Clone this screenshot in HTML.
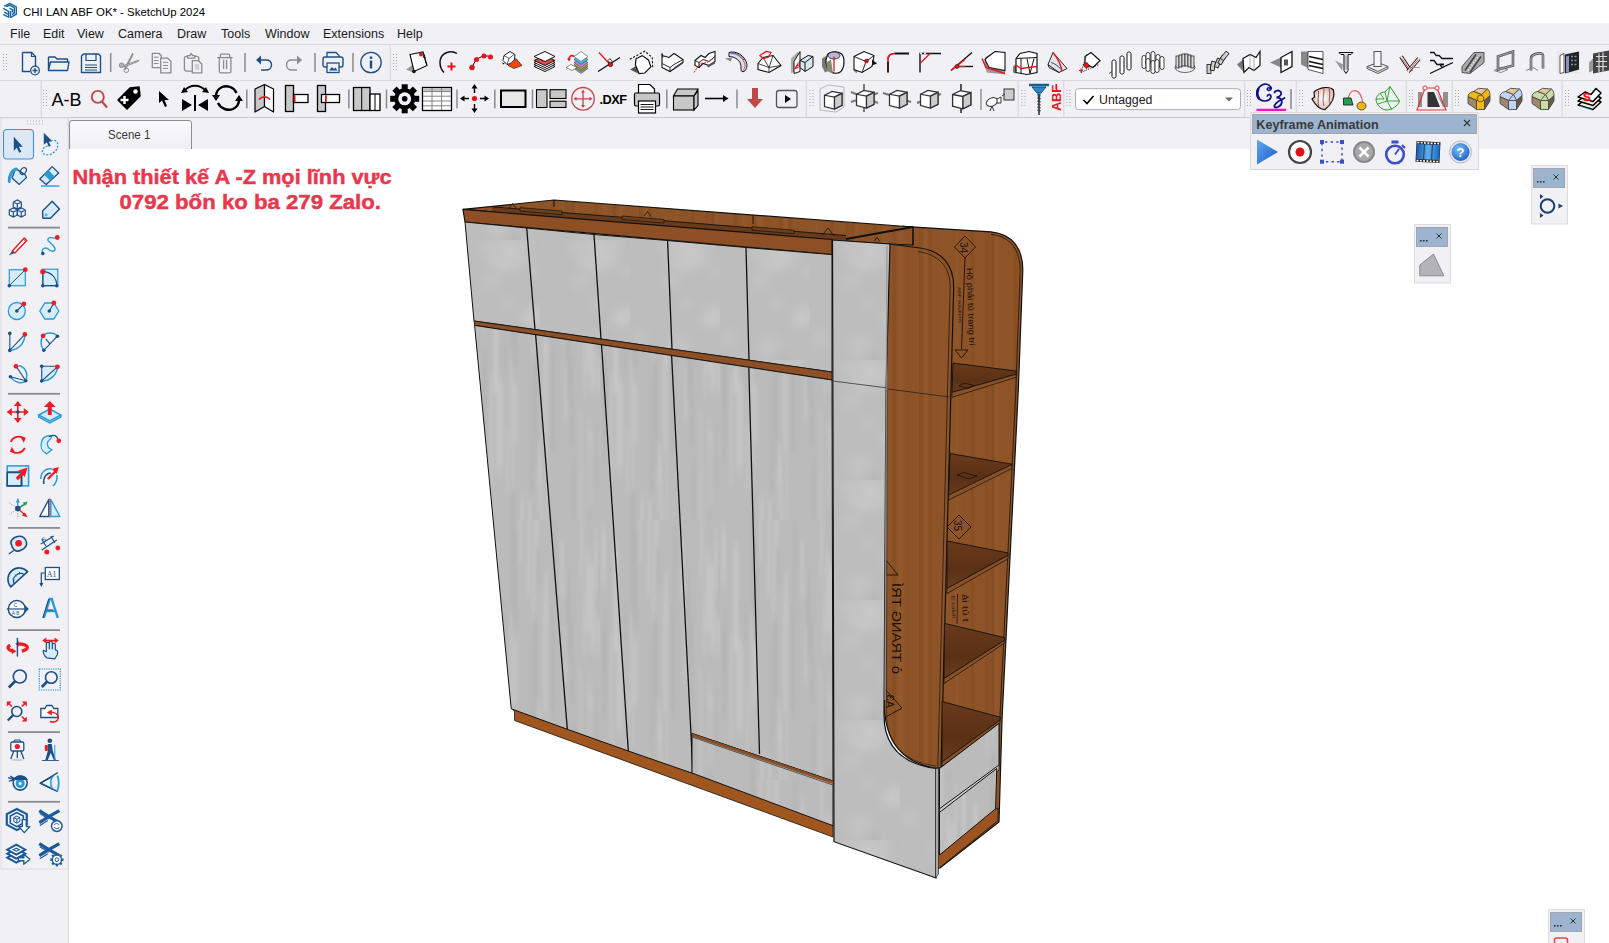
<!DOCTYPE html>
<html><head><meta charset="utf-8"><style>
html,body{margin:0;padding:0;width:1609px;height:943px;overflow:hidden;background:#fff}
svg{display:block;position:absolute;left:0;top:0;font-family:"Liberation Sans",sans-serif}
</style></head><body>
<svg width="1609" height="943" viewBox="0 0 1609 943" shape-rendering="geometricPrecision"><rect x="0" y="0" width="1609" height="23" fill="#ffffff"/><rect x="0" y="23" width="1609" height="21" fill="#f0f0f5"/><rect x="0" y="44" width="1609" height="1" fill="#d9d9de"/><rect x="0" y="45" width="1609" height="73" fill="#f0f0f5"/><rect x="0" y="80" width="1609" height="1" fill="#d9d9de"/><rect x="0" y="117" width="1609" height="1" fill="#c9c9ce"/><rect x="0" y="118" width="1609" height="31" fill="#f0f0f5"/><rect x="69" y="149" width="1540" height="794" fill="#ffffff"/><rect x="0" y="118" width="69" height="825" fill="#f0f0f5"/><rect x="68" y="118" width="1" height="825" fill="#d9d9de"/><text x="23.1" y="15.7" font-family='"Liberation Sans", sans-serif' font-size="11.6" fill="#000" textLength="182" lengthAdjust="spacingAndGlyphs">CHI LAN ABF OK* - SketchUp 2024</text><g fill="none" stroke="#1a64a8" stroke-width="1.5" stroke-linejoin="round"><path d="M4.2,6.3 L9.7,3.4 L16.3,6.8 V14.2 L10.5,17.6"/><path d="M3.2,8.3 L8.6,11.3 V17.8"/><path d="M4.3,12.2 L7.8,14.1"/><path d="M3.4,14.3 L7.8,16.8"/><path d="M6.2,6.6 L9.6,5.2 L14.2,7.6 V13.2 L12,14.6"/><path d="M9.4,8.2 L12.4,9.8 V12.4"/><path d="M10.5,11 V17.5"/></g><text x="10" y="38" font-family='"Liberation Sans", sans-serif' font-size="12.5" fill="#1a1a1a">File</text><text x="43" y="38" font-family='"Liberation Sans", sans-serif' font-size="12.5" fill="#1a1a1a">Edit</text><text x="77" y="38" font-family='"Liberation Sans", sans-serif' font-size="12.5" fill="#1a1a1a">View</text><text x="118" y="38" font-family='"Liberation Sans", sans-serif' font-size="12.5" fill="#1a1a1a">Camera</text><text x="177" y="38" font-family='"Liberation Sans", sans-serif' font-size="12.5" fill="#1a1a1a">Draw</text><text x="221" y="38" font-family='"Liberation Sans", sans-serif' font-size="12.5" fill="#1a1a1a">Tools</text><text x="265" y="38" font-family='"Liberation Sans", sans-serif' font-size="12.5" fill="#1a1a1a">Window</text><text x="323" y="38" font-family='"Liberation Sans", sans-serif' font-size="12.5" fill="#1a1a1a">Extensions</text><text x="397" y="38" font-family='"Liberation Sans", sans-serif' font-size="12.5" fill="#1a1a1a">Help</text><rect x="3" y="54" width="1" height="1" fill="#a8a8b0"/><rect x="6" y="54" width="1" height="1" fill="#a8a8b0"/><rect x="3" y="57" width="1" height="1" fill="#a8a8b0"/><rect x="6" y="57" width="1" height="1" fill="#a8a8b0"/><rect x="3" y="60" width="1" height="1" fill="#a8a8b0"/><rect x="6" y="60" width="1" height="1" fill="#a8a8b0"/><rect x="3" y="63" width="1" height="1" fill="#a8a8b0"/><rect x="6" y="63" width="1" height="1" fill="#a8a8b0"/><rect x="3" y="66" width="1" height="1" fill="#a8a8b0"/><rect x="6" y="66" width="1" height="1" fill="#a8a8b0"/><rect x="3" y="69" width="1" height="1" fill="#a8a8b0"/><rect x="6" y="69" width="1" height="1" fill="#a8a8b0"/><rect x="389.5" y="45" width="1.5" height="35" fill="#dcdce2"/><rect x="393" y="54" width="1" height="1" fill="#a8a8b0"/><rect x="396" y="54" width="1" height="1" fill="#a8a8b0"/><rect x="393" y="57" width="1" height="1" fill="#a8a8b0"/><rect x="396" y="57" width="1" height="1" fill="#a8a8b0"/><rect x="393" y="60" width="1" height="1" fill="#a8a8b0"/><rect x="396" y="60" width="1" height="1" fill="#a8a8b0"/><rect x="393" y="63" width="1" height="1" fill="#a8a8b0"/><rect x="396" y="63" width="1" height="1" fill="#a8a8b0"/><rect x="393" y="66" width="1" height="1" fill="#a8a8b0"/><rect x="396" y="66" width="1" height="1" fill="#a8a8b0"/><rect x="393" y="69" width="1" height="1" fill="#a8a8b0"/><rect x="396" y="69" width="1" height="1" fill="#a8a8b0"/><g transform="translate(20,51)"><path d="M2.5,1.5 H11.5 L15.5,5.5 V18 M2.5,1.5 V20.5 H10" fill="none" stroke="#1d4f86" stroke-width="1.4"/><path d="M11.5,1.5 V5.5 H15.5" fill="none" stroke="#1d4f86" stroke-width="1.2"/><circle cx="15" cy="19.5" r="4.3" fill="#f0f0f5" stroke="#1d4f86" stroke-width="1.3"/><path d="M15,17 V22 M12.5,19.5 H17.5" stroke="#1d4f86" stroke-width="1.3"/></g><g transform="translate(47,52)"><path d="M1.5,5 H8 L10,7 H20.5 V10 M1.5,5 V18.5 H20.5 L22,10 H3.5 L1.5,18" fill="none" stroke="#1d4f86" stroke-width="1.4" stroke-linejoin="round"/></g><g transform="translate(80,52)"><path d="M3.5,2 H18.5 L20.5,4 V20.5 H1.5 V4 Z" fill="none" stroke="#1d4f86" stroke-width="1.4"/><path d="M6,2 V8.5 H16 V2" fill="none" stroke="#1d4f86" stroke-width="1.2"/><path d="M5,13 H17 M5,15.5 H17 M5,18 H17" stroke="#1d4f86" stroke-width="1"/></g><rect x="109.95" y="53" width="1.5" height="19" fill="#8c8c8c"/><g transform="translate(119,52)"><path d="M13.6,1.3 L14.3,2 L6.5,17.5 L5.4,16.8 Z" fill="#8c8c8c" stroke="#8c8c8c" stroke-width="0.9" stroke-linejoin="round"/><path d="M19.7,8.2 L19.5,9.3 L5,14.8 L4.6,13.6 Z" fill="#f0f0f5" stroke="#8c8c8c" stroke-width="1" stroke-linejoin="round"/><circle cx="2.6" cy="13.3" r="2.3" fill="#b4b4b8" stroke="#8c8c8c" stroke-width="1"/><circle cx="7.3" cy="18.2" r="2.3" fill="none" stroke="#8c8c8c" stroke-width="1"/></g><g transform="translate(151,51)"><path d="M1.3,2.3 H8 L10.3,4.8 V16.6 H1.3 Z" fill="#f0f0f5" stroke="#8c8c8c" stroke-width="1.3" stroke-linejoin="round"/><path d="M9.7,7.2 H16.8 L19.9,10.4 V21.9 H9.7 Z" fill="#f0f0f5" stroke="#8c8c8c" stroke-width="1.3" stroke-linejoin="round"/><path d="M2.8,6.2 H7.5 M2.8,9.5 H7.5 M2.8,12.5 H7.5 M12,11.4 H17 M12,14.5 H17 M12,17.4 H17" stroke="#8c8c8c" stroke-width="1"/></g><g transform="translate(183,51)"><rect x="1.4" y="5.3" width="14.4" height="14.8" rx="2" fill="none" stroke="#8c8c8c" stroke-width="1.3"/><path d="M4.5,7.1 V4.6 H6.8 L8.2,2.4 L9.6,4.6 H11.9 V7.1 Z" fill="#f0f0f5" stroke="#8c8c8c" stroke-width="1.3" stroke-linejoin="round"/><path d="M9.3,9.7 H15.5 L18.8,13 V21.9 H9.3 Z" fill="#f0f0f5" stroke="#8c8c8c" stroke-width="1.3" stroke-linejoin="round"/><rect x="11.9" y="13.1" width="4.3" height="5.7" fill="#d0d0d4"/></g><g transform="translate(217,51)"><path d="M0.3,6.6 H15.7" stroke="#8c8c8c" stroke-width="1.3"/><path d="M3.3,6.6 V4.3 Q3.3,3.1 4.5,3.1 H11.4 Q12.6,3.1 12.6,4.3 V6.6" fill="none" stroke="#8c8c8c" stroke-width="1.3"/><path d="M2.3,6.6 V20.4 Q2.3,21.9 3.8,21.9 H12.4 Q13.9,21.9 13.9,20.4 V6.6" fill="none" stroke="#8c8c8c" stroke-width="1.3"/><path d="M6.6,8.8 V17.9 M9.6,8.8 V17.9" stroke="#8c8c8c" stroke-width="1.3"/></g><rect x="244.25" y="53" width="1.5" height="19" fill="#8c8c8c"/><g transform="translate(255,52)"><path d="M4,8 H11 C15,8 16.5,10.5 16.5,13 C16.5,16 14,18 11,18 H6" fill="none" stroke="#1d4f86" stroke-width="1.4"/><path d="M1,8 L6,3.5 L6,12.5 Z" fill="#1d4f86"/></g><g transform="translate(286,52)"><g transform="translate(17,0) scale(-1,1)"><path d="M4,8 H11 C15,8 16.5,10.5 16.5,13 C16.5,16 14,18 11,18 H6" fill="none" stroke="#8c8c8c" stroke-width="1.4"/><path d="M1,8 L6,3.5 L6,12.5 Z" fill="#8c8c8c"/></g></g><rect x="314.25" y="53" width="1.5" height="19" fill="#8c8c8c"/><g transform="translate(322,51)"><path d="M5,6 V1.5 H14 L17,4.5 V6" fill="none" stroke="#1d4f86" stroke-width="1.3"/><rect x="1" y="6" width="20" height="10" rx="2" fill="none" stroke="#1d4f86" stroke-width="1.4"/><rect x="5" y="12" width="12" height="9.5" fill="#f0f0f5" stroke="#1d4f86" stroke-width="1.3"/><path d="M7,19.5 L10,16 L12,18 L13.5,16.5 L15.5,19.5 Z" fill="#1d4f86"/></g><rect x="352.25" y="53" width="1.5" height="19" fill="#8c8c8c"/><g transform="translate(360,51.5)"><circle cx="11" cy="11" r="10.2" fill="none" stroke="#1d4f86" stroke-width="1.3"/><rect x="9.8" y="9" width="2.4" height="8" fill="#1d4f86"/><rect x="9.8" y="5" width="2.4" height="2.4" fill="#1d4f86"/></g><g transform="translate(405,50.5)"><path d="M1,19 L8,14 L8,22 Z" fill="#999"/><path d="M5,4 L18,1.5 L22,15 L9,21 Z" fill="#ffffff" stroke="#111111" stroke-width="1.2"/><circle cx="16" cy="4" r="2" fill="#e8141c"/><circle cx="9" cy="21" r="1.8" fill="#111111"/><path d="M19,4 L21,13" stroke="#111111" stroke-width="1"/><path d="M17.5,7 L19.5,3.5 L20.5,7.5Z" fill="#111111"/></g><g transform="translate(437,50.5)"><path d="M20,3 C14,-1 3,2 3,12 C3,17 5,20 7,22" fill="none" stroke="#111111" stroke-width="1.5"/><path d="M14.5,12 V20 M10.5,16 H18.5" stroke="#e8141c" stroke-width="2"/></g><g transform="translate(469,50.5)"><path d="M3,17 L7,9 L15,5 L21,6" fill="none" stroke="#111111" stroke-width="1"/><circle cx="3" cy="17" r="2.5" fill="#e8141c" stroke="#600" stroke-width="0.4"/><circle cx="7.5" cy="9" r="2.5" fill="#e8141c"/><circle cx="15" cy="5.5" r="2.5" fill="#e8141c"/><circle cx="21.5" cy="6.5" r="2.5" fill="#e8141c"/></g><g transform="translate(501,50.5)"><path d="M3,5 L9,1 L14,4 L13,12 L6,14 L2,10 Z" fill="#ffffff" stroke="#111111" stroke-width="0.9"/><path d="M3,5 L8,8 L13,4 M8,8 L6,14" stroke="#111111" stroke-width="0.7" fill="none"/><path d="M7,15 L15,8 L21,15 L13,18 Z" fill="#f04810" stroke="#111111" stroke-width="0.6"/><path d="M1,12 L4,13 L2,14 Z" fill="#111111"/></g><g transform="translate(533,50.5)"><path d="M1,16 L12,11 L22,16 L12,21 Z" fill="#ffffff" stroke="#111111" stroke-width="1"/><path d="M1,14 L12,9 L22,14 L12,19 Z" fill="#ffffff" stroke="#111111" stroke-width="1"/><path d="M1,12 L12,7 L22,12 L12,17 Z" fill="#ffffff" stroke="#111111" stroke-width="1"/><path d="M1,10 L12,5 L22,10 L12,15 Z" fill="#e84848" stroke="#111111" stroke-width="1"/><path d="M1,6 L12,1 L22,6 L12,11 Z" fill="#ffffff" stroke="#111111" stroke-width="1"/></g><g transform="translate(565,50.5)"><path d="M9,18 L16,13 L23,18 L16,23 Z" fill="#9a9a9a" stroke="#444" stroke-width="0.6"/><path d="M9,16 L16,11 L23,16 L16,21 Z" fill="#70b060" stroke="#444" stroke-width="0.6"/><path d="M9,14 L16,9 L23,14 L16,19 Z" fill="#e0a060" stroke="#444" stroke-width="0.6"/><path d="M9,12 L16,7 L23,12 L16,17 Z" fill="#c080e0" stroke="#444" stroke-width="0.6"/><path d="M9,9 L16,4 L23,9 L16,14 Z" fill="#30c0e0" stroke="#444" stroke-width="0.6"/><path d="M9,6 L16,1 L23,6 L16,11 Z" fill="#ffffff" stroke="#444" stroke-width="0.6"/><path d="M1,17 L6,14 L12,17 L7,20 Z" fill="#ffffff" stroke="#444" stroke-width="0.6"/><path d="M9,6 C6,4 4,6 4,9" fill="none" stroke="#e8141c" stroke-width="1.8"/><path d="M2,8 L6,8 L4,11Z" fill="#e8141c"/></g><g transform="translate(597,50.5)"><path d="M1,21 L23,7" stroke="#111111" stroke-width="1.3"/><path d="M2,2 L13,14" stroke="#e8141c" stroke-width="1.3"/><path d="M11,10 L13,8 L15,11 L13,13Z" fill="#ffffff" stroke="#111111" stroke-width="0.8"/><circle cx="13.5" cy="14" r="2.2" fill="#e8141c" stroke="#111111" stroke-width="0.6"/></g><g transform="translate(629,50.5)"><path d="M0.8,8.8 L15.7,0.7 L23.2,6.9 L23.8,18.1" fill="none" stroke="#111111" stroke-width="1.1" stroke-dasharray="2.2,1.6"/><path d="M1,19 L8,15 L9,23 Z" fill="#555"/><path d="M7,8.2 L13.2,5.1 L19.4,9.4 L21.9,16.3 L15.7,22.5 L10.1,23.1 L6.4,14.4Z" fill="#ffffff" stroke="#111111" stroke-width="1.2"/></g><g transform="translate(661,50.5)"><path d="M1,3 V17 L9,21 L22,12 V9 L13,3 L8,7 L1,5" fill="#ffffff" stroke="#111111" stroke-width="1.1"/><path d="M1,13 L9,17 L13,14 L22,9 M9,17 V21 M1,3 L2,7" fill="none" stroke="#111111" stroke-width="0.9"/><path d="M13,19 L22,13 V11 L13,17Z" fill="#444"/></g><g transform="translate(693,50.5)"><path d="M2,10 L8,5 L12,7 L16,3 L22,1 V11 L16,15 L10,13 L6,17 L2,15 Z" fill="#ffffff" stroke="#111111" stroke-width="1.1"/><path d="M2,10 L6,12 V17 M6,12 L10,9 L16,11 L22,6" fill="none" stroke="#111111" stroke-width="0.9"/><path d="M1,22 L7,13 L14,12 L20,8" fill="none" stroke="#e8141c" stroke-width="1" stroke-dasharray="2,1"/><path d="M14,15 L22,11 V13 L15,17Z" fill="#555"/></g><g transform="translate(725,50.5)"><path d="M0,8 L7,7 L6,11 Z" fill="#888"/><path d="M4,2 C10,0 20,4 22,14 C22,18 20,22 17,21 C15,20 17,16 15,12 C12,7 7,6 4,6 Z" fill="#e0e0e0" stroke="#111111" stroke-width="1"/><path d="M6,3 C12,3 18,7 20,14 C20,17 19,19 18,20" fill="none" stroke="#c03070" stroke-width="0.8"/><path d="M5,2.5 C11,2 17,5 19,10" fill="none" stroke="#3050c0" stroke-width="0.8"/></g><g transform="translate(757,50.5)"><path d="M1,13 L6,7 L16,5 L24,15 L12,22 L1,19 Z" fill="#ffffff" stroke="#111111" stroke-width="1.1"/><path d="M1,13 L12,17 L24,15 M12,17 V22 M6,7 L12,17 M16,5 L12,17" fill="none" stroke="#111111" stroke-width="0.8"/><path d="M3,5 L9,1 L14,2 L11,7 L6,8 Z" fill="none" stroke="#e8141c" stroke-width="1.2"/></g><g transform="translate(789,50.5)"><path d="M2,8 L9,1 V19 L2,23 Z" fill="#aaa"/><path d="M5,11 L11,1 V21 L5,23 Z" fill="#ffffff" stroke="#111111" stroke-width="1"/><path d="M6,18 L9,13 L9,17Z" fill="none" stroke="#e8141c" stroke-width="1.1"/><path d="M11,10 L19,5 L24,6 V16 L16,21 L11,17Z" fill="#d8e6ee" stroke="#111111" stroke-width="1"/><path d="M11,10 L16,12 L24,6 M16,12 V21" fill="none" stroke="#111111" stroke-width="1"/></g><g transform="translate(821,50.5)"><path d="M1,8 L6,5 L8,20 L4,22 L1,16Z" fill="#777"/><path d="M6,6 C6,1 16,0 20,3 C24,6 24,16 20,21 C16,24 10,23 8,19 C5,16 4,10 6,6Z" fill="#ffffff" stroke="#111111" stroke-width="1.2"/><ellipse cx="13" cy="5" rx="6" ry="3.5" fill="#b8b8d8" stroke="#111111" stroke-width="0.8"/><path d="M13,6 V21" stroke="#e8141c" stroke-width="1.3"/><path d="M5,12 L10,9 L12,23 L7,21Z" fill="#8a8a70"/></g><g transform="translate(853,50.5)"><path d="M0,20 L4,19 L4,23Z" fill="#888"/><path d="M1,6 L11,1 L21,5 L19,16 L9,22 L1,19 Z" fill="#ffffff" stroke="#111111" stroke-width="1.1"/><path d="M1,6 L13,11 L21,5 M13,11 L9,22" fill="none" stroke="#111111" stroke-width="0.9"/><circle cx="13.5" cy="10.5" r="2" fill="#e8141c" stroke="#111111" stroke-width="0.5"/><path d="M19,9 L24,13 L19,15Z" fill="#111111"/></g><g transform="translate(885,50.5)"><path d="M3,22 V9 C3,5 5,3 10,3" fill="none" stroke="#e8141c" stroke-width="1.5"/><path d="M3,22 V11" stroke="#111111" stroke-width="1.6"/><path d="M10,3 H24" stroke="#111111" stroke-width="2"/><path d="M3,9 C3,5 5,3 10,3" fill="none" stroke="#e8141c" stroke-width="1.5"/></g><g transform="translate(917,50.5)"><path d="M3,22 V3 H24" fill="none" stroke="#111111" stroke-width="1.4" stroke-dasharray="0"/><path d="M3,3 H10" stroke="#f0f0f5" stroke-width="1.6" stroke-dasharray="2,2"/><path d="M3,13 L13,3" stroke="#e8141c" stroke-width="1.3"/></g><g transform="translate(949,50.5)"><path d="M2,20 L23,2" stroke="#111111" stroke-width="1.3"/><path d="M2,20 L16,9" stroke="#e8141c" stroke-width="1.3"/><path d="M8,16 H24" stroke="#111111" stroke-width="1.3"/><path d="M8,16 H16" stroke="#e8141c" stroke-width="1.3"/><circle cx="8" cy="16" r="2" fill="#e8141c" stroke="#111111" stroke-width="0.6"/></g><g transform="translate(981,50.5)"><path d="M3,14 L6,22 L24,24 V2 L14,1 L4,7Z" fill="#999"/><path d="M6,7 L14,1 L24,2 V20 L8,17 L4,9Z" fill="#ffffff" stroke="#111111" stroke-width="1.1"/><path d="M1,8 L5,17 L24,23" fill="none" stroke="#e8141c" stroke-width="1.5"/></g><g transform="translate(1013,50.5)"><path d="M0,16 L3,14 L3,23 L0,22Z" fill="#777"/><path d="M3,8 L7,3 L16,1 L24,3 V22 L14,24 L3,22 Z" fill="#ffffff" stroke="#111111" stroke-width="1.2"/><path d="M3,8 L24,7 M8,8 V23 M14,8 L17,23 L21,8" fill="none" stroke="#111111" stroke-width="1"/><path d="M2,14 L8,18 L15,17 L24,16" fill="none" stroke="#e8141c" stroke-width="1.4"/></g><g transform="translate(1045,50.5)"><path d="M3,14 L8,2 C13,7 17,13 22,18 L14,22 L4,17Z" fill="#e2e2e2" stroke="#111111" stroke-width="0.9"/><path d="M8,2 C12,7 16,13 17,21" fill="none" stroke="#e8141c" stroke-width="1.3"/><path d="M6,12 C10,13 14,16 16,19" fill="none" stroke="#3050d0" stroke-width="1"/><path d="M3,14 L14,22" stroke="#111111" stroke-width="0.9"/></g><g transform="translate(1077,50.5)"><path d="M8,6 L14,2 L23,10 L16,17 L8,13Z" fill="#ffffff" stroke="#111111" stroke-width="1.2"/><path d="M4,22 L10,3 M4,22 L22,14" stroke="#111111" stroke-width="0.8" stroke-dasharray="1.5,1"/><path d="M6,14 L10,12 L13,16 L9,18Z" fill="#e8141c" stroke="#111111" stroke-width="0.6"/><path d="M2,20 H6 M4,18 V22" stroke="#e8141c" stroke-width="1"/></g><g transform="translate(1109,50.5)"><path d="M0,23 L5,20" stroke="#555" stroke-width="1"/><path d="M3,11 C3,9 7,9 7,11 V26 C7,28 3,28 3,26 Z" fill="#ffffff" stroke="#111111" stroke-width="1"/><path d="M11,7 C11,5 15,5 15,7 V22 C15,24 11,24 11,22 Z" fill="#ffffff" stroke="#111111" stroke-width="1"/><path d="M18,3 C18,1 22,1 22,3 V18 C22,20 18,20 18,18 Z" fill="#ffffff" stroke="#111111" stroke-width="1"/></g><g transform="translate(1141,50.5)"><rect x="1" y="5" width="4" height="13" rx="2" fill="#ffffff" stroke="#111111" stroke-width="0.8"/><rect x="5" y="2" width="4" height="13" rx="2" fill="#ffffff" stroke="#111111" stroke-width="0.8"/><rect x="10" y="1" width="4" height="13" rx="2" fill="#ffffff" stroke="#111111" stroke-width="0.8"/><rect x="15" y="4" width="4" height="13" rx="2" fill="#ffffff" stroke="#111111" stroke-width="0.8"/><rect x="19" y="6" width="4" height="13" rx="2" fill="#ffffff" stroke="#111111" stroke-width="0.8"/><rect x="5" y="8" width="4" height="13" rx="2" fill="#ffffff" stroke="#111111" stroke-width="0.8"/><rect x="10" y="10" width="4" height="13" rx="2" fill="#ffffff" stroke="#111111" stroke-width="0.8"/><rect x="14" y="9" width="4" height="13" rx="2" fill="#ffffff" stroke="#111111" stroke-width="0.8"/></g><g transform="translate(1173,50.5)"><ellipse cx="12" cy="17" rx="10" ry="5" fill="none" stroke="#444" stroke-width="0.8"/><rect x="3" y="5.5" width="3" height="12" fill="#ddd" stroke="#111111" stroke-width="0.7"/><rect x="6" y="4.5" width="3" height="12" fill="#ddd" stroke="#111111" stroke-width="0.7"/><rect x="9" y="3.5" width="3" height="12" fill="#ddd" stroke="#111111" stroke-width="0.7"/><rect x="12" y="3.5" width="3" height="12" fill="#ddd" stroke="#111111" stroke-width="0.7"/><rect x="15" y="4.5" width="3" height="12" fill="#ddd" stroke="#111111" stroke-width="0.7"/><rect x="18" y="5.5" width="3" height="12" fill="#ddd" stroke="#111111" stroke-width="0.7"/></g><g transform="translate(1205,50.5)"><rect x="2" y="14" width="4" height="9" fill="#ccc" stroke="#111111" stroke-width="0.8" transform="rotate(0 4 18)"/><rect x="6" y="11" width="4" height="9" fill="#ccc" stroke="#111111" stroke-width="0.8" transform="rotate(10 8 15)"/><rect x="11" y="8" width="4" height="9" fill="#ccc" stroke="#111111" stroke-width="0.8" transform="rotate(20 13 12)"/><rect x="15" y="5" width="4" height="9" fill="#ccc" stroke="#111111" stroke-width="0.8" transform="rotate(30 17 9)"/><rect x="18" y="1" width="4" height="9" fill="#ccc" stroke="#111111" stroke-width="0.8" transform="rotate(40 20 5)"/></g><g transform="translate(1237,50.5)"><path d="M0,14 L7,8 L7,22 Z" fill="#777"/><path d="M6,8 L13,4 L19,7 L23,1 V15 L17,20 L12,17 L7,22Z" fill="#ffffff" stroke="#111111" stroke-width="1.2"/><path d="M13,4 V17 M17,7 V20" stroke="#999" stroke-width="0.8"/></g><g transform="translate(1269,50.5)"><path d="M1,12 L12,7 L12,17 Z" fill="#888"/><path d="M12,7 L23,1 V16 L12,22 Z" fill="#ffffff" stroke="#111111" stroke-width="1.3"/><rect x="15" y="9" width="4" height="6" fill="#555"/></g><g transform="translate(1301,50.5)"><path d="M0,1 H8 V18 L0,14Z" fill="#888"/><path d="M7,1 H22 V23 L7,19Z" fill="#ffffff" stroke="#333" stroke-width="0.8"/><path d="M8,6 L22,9 M8,11 L22,14 M8,15 L22,18" stroke="#111111" stroke-width="1.6"/></g><g transform="translate(1333,50.5)"><path d="M2,10 L9,20 L10,14 Z" fill="#999"/><path d="M6,2 H20 L18,4 H15 V20 L13,23 L11,20 V4 H8Z" fill="#e8e8e8" stroke="#111111" stroke-width="1"/><path d="M13,5 V19" stroke="#777" stroke-width="0.8"/></g><g transform="translate(1365,50.5)"><path d="M2,16 L13,12 L23,16 L13,21Z" fill="#eee" stroke="#555" stroke-width="1"/><path d="M2,16 V18 L13,23 L23,18 V16" fill="none" stroke="#555" stroke-width="1"/><rect x="9" y="1" width="7" height="15" fill="#f4f4f4" stroke="#555" stroke-width="1"/></g><g transform="translate(1397,50.5)"><path d="M4,6 L14,21" stroke="#111111" stroke-width="4"/><path d="M4,6 L14,21" stroke="#fff" stroke-width="2.2"/><path d="M5,8 L13,20" stroke="#e8141c" stroke-width="0.8"/><path d="M22,8 L11,21" stroke="#111111" stroke-width="4"/><path d="M22,8 L11,21" stroke="#fff" stroke-width="2.2"/><path d="M21,9 L12,20" stroke="#e8141c" stroke-width="0.8"/><path d="M12,17 H23" stroke="#888" stroke-width="0.8"/></g><g transform="translate(1429,50.5)"><path d="M1,2 H5 L7,5 H10 L13,8 H24" fill="none" stroke="#111111" stroke-width="1.3"/><path d="M1,10 H5 L8,14 H11 L13,17 L24,12 M1,23 L24,12" fill="none" stroke="#111111" stroke-width="1.3"/><path d="M11,14 H15" stroke="#111111" stroke-width="2"/></g><g transform="translate(1461,50.5)"><path d="M1,22 V16 L13,2 H23 V12 L9,23Z" fill="#aaa" stroke="#333" stroke-width="0.8"/><path d="M4,20 L15,4 M9,22 L20,6" stroke="#444" stroke-width="1.6"/><path d="M7,20 L18,5" stroke="#eee" stroke-width="1.5" stroke-dasharray="1.5,1.5"/></g><g transform="translate(1493,50.5)"><path d="M1,20 L8,17 L15,19 L8,22Z" fill="none" stroke="#888" stroke-width="1"/><path d="M5,6 L20,1 V15 L5,19Z" fill="none" stroke="#555" stroke-width="2.6"/><path d="M5,6 L20,1 V15 L5,19Z" fill="none" stroke="#aaa" stroke-width="1"/></g><g transform="translate(1525,50.5)"><path d="M1,20 L8,17 L13,20" fill="none" stroke="#888" stroke-width="1"/><path d="M6,20 V8 C6,3 18,1 18,5 V18" fill="none" stroke="#555" stroke-width="2.6"/><path d="M6,20 V8 C6,3 18,1 18,5 V18" fill="none" stroke="#bbb" stroke-width="1"/></g><g transform="translate(1557,50.5)"><rect x="0" y="1" width="23" height="22" fill="#e8e8e8"/><path d="M3,5 L7,3 V22 L3,23Z" fill="#ffffff" stroke="#333" stroke-width="0.8"/><path d="M8,4 L22,1 V19 L8,23Z" fill="#222"/><path d="M9,6 L12,5 V22 L9,22Z" fill="#8890c0"/><path d="M14,6 H20 M14,10 H20 M14,14 H20" stroke="#8890c0" stroke-width="1.5" stroke-dasharray="2,1.5"/></g><g transform="translate(1589,50.5)"><path d="M0,12 L4,8 V20 L0,22Z" fill="#999"/><path d="M4,3 L20,0 V20 L4,23Z" fill="#444"/><path d="M7,6 H18 M7,11 H18 M7,16 H18 M10,3 V22 M14,2 V21" stroke="#ddd" stroke-width="1.2"/></g><rect x="40.5" y="81" width="1.5" height="36" fill="#dcdce2"/><rect x="43" y="90" width="1" height="1" fill="#a8a8b0"/><rect x="46" y="90" width="1" height="1" fill="#a8a8b0"/><rect x="43" y="93" width="1" height="1" fill="#a8a8b0"/><rect x="46" y="93" width="1" height="1" fill="#a8a8b0"/><rect x="43" y="96" width="1" height="1" fill="#a8a8b0"/><rect x="46" y="96" width="1" height="1" fill="#a8a8b0"/><rect x="43" y="99" width="1" height="1" fill="#a8a8b0"/><rect x="46" y="99" width="1" height="1" fill="#a8a8b0"/><rect x="43" y="102" width="1" height="1" fill="#a8a8b0"/><rect x="46" y="102" width="1" height="1" fill="#a8a8b0"/><rect x="43" y="105" width="1" height="1" fill="#a8a8b0"/><rect x="46" y="105" width="1" height="1" fill="#a8a8b0"/><text x="51.5" y="105.6" font-family='"Liberation Sans", sans-serif' font-size="18" fill="#000" textLength="30" lengthAdjust="spacingAndGlyphs">A-B</text><circle cx="97.8" cy="96.9" r="6" fill="none" stroke="#c04848" stroke-width="1.9"/><path d="M102,101.5 L107,107.5" stroke="#c04848" stroke-width="2.2"/><g transform="translate(117,85)"><path d="M13,3 L22,2 L23,11 L10,24 L1,15 Z" fill="#000" stroke="#000" stroke-width="1.5" stroke-linejoin="round"/><circle cx="18.5" cy="6.5" r="2.2" fill="#fff"/><path d="M7.5,11 V19 M3.5,15 H11.5" stroke="#fff" stroke-width="2.4"/></g><g transform="translate(158,90)"><path d="M1,1 L1,13 L4,10.5 L7,17 L9,16 L6.5,10 L11,10 Z" fill="#000"/></g><g transform="translate(181,83)"><path d="M3,8 C9,1 19,1 25,8" fill="none" stroke="#000" stroke-width="2"/><path d="M0,10 L3,4 L7,9Z M28,10 L25,4 L21,9Z" fill="#000"/><path d="M1,16 L11,22 L1,28Z M27,16 L17,22 L27,28Z" fill="#000"/><rect x="13" y="12" width="2" height="16" fill="#000"/></g><g transform="translate(213,84)"><path d="M23.5,9 C21,3 14,1 9,3 C5,5 3,8 3,12" fill="none" stroke="#000" stroke-width="2.4"/><path d="M5,19 C8,25 15,27 20,25 C24,23 26,20 26,16" fill="none" stroke="#000" stroke-width="2.4"/><path d="M-1,11 L7,11 L3,17Z M22,17 L30,17 L26,11Z" fill="#000"/></g><rect x="246.05" y="89.5" width="1.5" height="18.900000000000006" fill="#8c8c8c"/><path d="M255,89 L264.5,84.5 L264.5,106.5 L255,112 Z" fill="#c8c8c8" stroke="#000" stroke-width="1.2" stroke-linejoin="round"/><path d="M264.5,84.5 L273.5,89 L273.5,112 L264.5,106.5 Z" fill="#fff" stroke="#000" stroke-width="1.2" stroke-linejoin="round"/><path d="M259,99.5 C262,96 267,96 270,99.5" fill="none" stroke="#e8141c" stroke-width="1.6"/><rect x="285.5" y="85.5" width="8" height="26" fill="#c8c8c8" stroke="#000" stroke-width="1.3"/><rect x="293.5" y="94.5" width="14.5" height="8" fill="#fff" stroke="#000" stroke-width="1.3"/><rect x="293.7" y="95.2" width="1.8" height="6.6" fill="#e8141c"/><rect x="317.5" y="85.5" width="8" height="26" fill="#c8c8c8" stroke="#000" stroke-width="1.3"/><rect x="321.5" y="94.5" width="18" height="8" fill="#fff" stroke="#000" stroke-width="1.3"/><rect x="325" y="95.2" width="1.8" height="6.6" fill="#e8141c"/><rect x="348.05" y="89.5" width="1.5" height="18.900000000000006" fill="#8c8c8c"/><rect x="353.5" y="87.5" width="16.5" height="23" fill="#c8c8c8" stroke="#000" stroke-width="1.3"/><path d="M361.7,87.5 V110.5" stroke="#000" stroke-width="1"/><rect x="370" y="94" width="10" height="16.5" fill="#fff" stroke="#000" stroke-width="1.3"/><path d="M375,94 V110.5" stroke="#000" stroke-width="1"/><rect x="385.75" y="89.5" width="1.5" height="18.900000000000006" fill="#8c8c8c"/><g transform="translate(404.7,98.8)"><rect x="-3" y="-14.5" width="6" height="6" fill="#000" transform="rotate(0)"/><rect x="-3" y="-14.5" width="6" height="6" fill="#000" transform="rotate(45)"/><rect x="-3" y="-14.5" width="6" height="6" fill="#000" transform="rotate(90)"/><rect x="-3" y="-14.5" width="6" height="6" fill="#000" transform="rotate(135)"/><rect x="-3" y="-14.5" width="6" height="6" fill="#000" transform="rotate(180)"/><rect x="-3" y="-14.5" width="6" height="6" fill="#000" transform="rotate(225)"/><rect x="-3" y="-14.5" width="6" height="6" fill="#000" transform="rotate(270)"/><rect x="-3" y="-14.5" width="6" height="6" fill="#000" transform="rotate(315)"/><circle r="10.5" fill="#000"/><circle r="6.5" fill="#f0f0f5"/><circle r="2.8" fill="#000"/></g><rect x="422.5" y="87.5" width="29" height="23" fill="#fff" stroke="#000" stroke-width="1.3"/><rect x="423.2" y="88.2" width="27.6" height="3.4" fill="#c0c0c0"/><path d="M432,88 V110 M441.6,88 V110 M423,91.6 H451 M423,96.2 H451 M423,101 H451 M423,105.8 H451" stroke="#777" stroke-width="0.9"/><rect x="456.25" y="89.5" width="1.5" height="18.900000000000006" fill="#8c8c8c"/><path d="M474.5,86 V93 M474.5,104 V111 M462,98.5 H469 M480,98.5 H487" stroke="#000" stroke-width="1.4"/><path d="M474.5,84 L471.5,88.5 H477.5Z M474.5,113 L471.5,108.5 H477.5Z M460,98.5 L464.5,95.5 V101.5Z M489,98.5 L484.5,95.5 V101.5Z" fill="#000"/><circle cx="474.5" cy="98.5" r="2.6" fill="#e8141c"/><rect x="494.05" y="89.5" width="1.5" height="18.900000000000006" fill="#8c8c8c"/><rect x="501" y="90.5" width="24.5" height="16.5" fill="#e8e8e8" stroke="#000" stroke-width="2"/><rect x="531.75" y="89.5" width="1.5" height="18.900000000000006" fill="#8c8c8c"/><rect x="536.5" y="89.7" width="10.5" height="17.8" fill="#c8c8c8" stroke="#000" stroke-width="1.1"/><rect x="550" y="89.7" width="16" height="8.8" fill="#c8c8c8" stroke="#000" stroke-width="1.1"/><rect x="550" y="101.2" width="16" height="6.3" fill="#c8c8c8" stroke="#000" stroke-width="1.1"/><circle cx="583" cy="98.8" r="11.3" fill="none" stroke="#c04848" stroke-width="1.3"/><path d="M583,91 V106.5 M575,98.8 H591" stroke="#c04848" stroke-width="1.3"/><path d="M583,89.5 L581,92.5 H585Z M583,108 L581,105 H585Z M573.5,98.8 L576.5,96.8 V100.8Z M592.5,98.8 L589.5,96.8 V100.8Z" fill="#c04848"/><text x="599.5" y="103.6" font-family='"Liberation Sans", sans-serif' font-size="12.8" font-weight="bold" fill="#000" letter-spacing="-0.5">.DXF</text><path d="M638.5,93 V84.5 H650 L654.5,89 V93" fill="#fff" stroke="#000" stroke-width="1.2"/><rect x="634.5" y="93" width="25" height="13" rx="1.5" fill="#c8c8c8" stroke="#000" stroke-width="1.2"/><rect x="638.5" y="101" width="17" height="12" fill="#fff" stroke="#000" stroke-width="1.2"/><path d="M640.5,104.5 H653.5 M640.5,107 H653.5 M640.5,109.5 H653.5" stroke="#000" stroke-width="0.9"/><rect x="666.05" y="89.5" width="1.5" height="18.900000000000006" fill="#8c8c8c"/><path d="M673.5,96 L677.5,89 H698 L694,96 Z" fill="#c8c8c8" stroke="#000" stroke-width="1.1"/><rect x="673.5" y="96" width="20.5" height="14" fill="#c8c8c8" stroke="#000" stroke-width="1.1"/><path d="M694,96 L698,91 V105.5 L694,110Z" fill="#c8c8c8" stroke="#000" stroke-width="1.1"/><path d="M705,98.5 H725" stroke="#000" stroke-width="1.6"/><path d="M728.5,98.5 L723,95 V102Z" fill="#000"/><rect x="736.25" y="89.5" width="1.5" height="18.900000000000006" fill="#8c8c8c"/><path d="M752,88 H758 V99 H763 L755,108 L747,99 H752Z" fill="#c04848"/><rect x="776.5" y="90.5" width="20.5" height="17" rx="2.5" fill="none" stroke="#555" stroke-width="1.3"/><path d="M785,95 L791,99 L785,103Z" fill="#000"/><rect x="805.5" y="81" width="1.5" height="36" fill="#dcdce2"/><rect x="809.5" y="90" width="1" height="1" fill="#a8a8b0"/><rect x="812.5" y="90" width="1" height="1" fill="#a8a8b0"/><rect x="809.5" y="93" width="1" height="1" fill="#a8a8b0"/><rect x="812.5" y="93" width="1" height="1" fill="#a8a8b0"/><rect x="809.5" y="96" width="1" height="1" fill="#a8a8b0"/><rect x="812.5" y="96" width="1" height="1" fill="#a8a8b0"/><rect x="809.5" y="99" width="1" height="1" fill="#a8a8b0"/><rect x="812.5" y="99" width="1" height="1" fill="#a8a8b0"/><rect x="809.5" y="102" width="1" height="1" fill="#a8a8b0"/><rect x="812.5" y="102" width="1" height="1" fill="#a8a8b0"/><rect x="809.5" y="105" width="1" height="1" fill="#a8a8b0"/><rect x="812.5" y="105" width="1" height="1" fill="#a8a8b0"/><g transform="translate(818,85)"><path d="M2,4 L10,0 L26,2 V22 L18,27 L2,25Z" fill="none" stroke="#aaa" stroke-width="0.8"/></g><g transform="translate(822,89) scale(1.25)"><path d="M2,5 L8,2 L16,3.5 L16,13 L10,16 L2,14Z" fill="#fff" stroke="#333" stroke-width="1"/><path d="M2,5 L10,6.5 L16,3.5 M10,6.5 V16" fill="none" stroke="#333" stroke-width="1"/><path d="M10,6.5 L16,3.5 V13 L10,16Z" fill="#ccc" stroke="#333" stroke-width="1"/></g><g transform="translate(851,84)"><path d="M13,0 V28 M0,8 L27,19 M0,18 L27,9" stroke="#555" stroke-width="2" opacity="0.75"/></g><g transform="translate(854,88) scale(1.25)"><path d="M2,5 L8,2 L16,3.5 L16,13 L10,16 L2,14Z" fill="#fff" stroke="#333" stroke-width="1"/><path d="M2,5 L10,6.5 L16,3.5 M10,6.5 V16" fill="none" stroke="#333" stroke-width="1"/><path d="M10,6.5 L16,3.5 V13 L10,16Z" fill="#ccc" stroke="#333" stroke-width="1"/></g><g transform="translate(883,84)"><path d="M0,9 L28,18" stroke="#777" stroke-width="2"/></g><g transform="translate(887,88) scale(1.25)"><path d="M2,5 L8,2 L16,3.5 L16,13 L10,16 L2,14Z" fill="#fff" stroke="#333" stroke-width="1"/><path d="M2,5 L10,6.5 L16,3.5 M10,6.5 V16" fill="none" stroke="#333" stroke-width="1"/><path d="M10,6.5 L16,3.5 V13 L10,16Z" fill="#ccc" stroke="#333" stroke-width="1"/></g><g transform="translate(917,84)"><path d="M0,19 L24,10" stroke="#777" stroke-width="2"/></g><g transform="translate(918,88) scale(1.25)"><path d="M2,5 L8,2 L16,3.5 L16,13 L10,16 L2,14Z" fill="#fff" stroke="#333" stroke-width="1"/><path d="M2,5 L10,6.5 L16,3.5 M10,6.5 V16" fill="none" stroke="#333" stroke-width="1"/><path d="M10,6.5 L16,3.5 V13 L10,16Z" fill="#ccc" stroke="#333" stroke-width="1"/></g><g transform="translate(950,84)"><path d="M11,0 V29" stroke="#555" stroke-width="2"/></g><g transform="translate(950,88) scale(1.3)"><path d="M2,5 L8,2 L16,3.5 L16,13 L10,16 L2,14Z" fill="#fff" stroke="#333" stroke-width="1"/><path d="M2,5 L10,6.5 L16,3.5 M10,6.5 V16" fill="none" stroke="#333" stroke-width="1"/><path d="M10,6.5 L16,3.5 V13 L10,16Z" fill="#ccc" stroke="#333" stroke-width="1"/></g><rect x="980.35" y="89" width="1.3" height="21" fill="#888"/><g transform="translate(984,88)"><rect x="20" y="1" width="10" height="11" fill="#ccc" stroke="#333" stroke-width="1"/><ellipse cx="8" cy="14" rx="6" ry="4" fill="#fff" stroke="#333" stroke-width="1" transform="rotate(-25 8 14)"/><path d="M13,11 L17,9 V15 L13,15Z M8,18 L6,23 M8,18 L10,23" fill="#fff" stroke="#333" stroke-width="1"/><path d="M18,8 L21,6" stroke="#333" stroke-width="1"/></g><rect x="1017.5" y="81" width="1.5" height="36" fill="#dcdce2"/><rect x="1021.5" y="90" width="1" height="1" fill="#a8a8b0"/><rect x="1024.5" y="90" width="1" height="1" fill="#a8a8b0"/><rect x="1021.5" y="93" width="1" height="1" fill="#a8a8b0"/><rect x="1024.5" y="93" width="1" height="1" fill="#a8a8b0"/><rect x="1021.5" y="96" width="1" height="1" fill="#a8a8b0"/><rect x="1024.5" y="96" width="1" height="1" fill="#a8a8b0"/><rect x="1021.5" y="99" width="1" height="1" fill="#a8a8b0"/><rect x="1024.5" y="99" width="1" height="1" fill="#a8a8b0"/><rect x="1021.5" y="102" width="1" height="1" fill="#a8a8b0"/><rect x="1024.5" y="102" width="1" height="1" fill="#a8a8b0"/><rect x="1021.5" y="105" width="1" height="1" fill="#a8a8b0"/><rect x="1024.5" y="105" width="1" height="1" fill="#a8a8b0"/><g transform="translate(1028,84)"><path d="M1,1 H21" stroke="#1a5c8a" stroke-width="2.5"/><path d="M4,3 H18 L13,9 H9Z" fill="#2a8ad0" stroke="#0a3050" stroke-width="0.8"/><path d="M9,9 H13 L11,20Z" fill="#2a8ad0"/><path d="M11,10 V31" stroke="#333" stroke-width="1.6"/><path d="M9,14 L13,15 M9,17 L13,18 M9,20 L13,21 M9,23 L13,24 M9,26 L13,27" stroke="#333" stroke-width="0.8"/></g><text transform="translate(1061,111) rotate(-90)" font-family='"Liberation Sans", sans-serif' font-size="13" font-weight="bold" fill="#e8141c" letter-spacing="-0.3">ABF</text><rect x="1055.5" y="84" width="1.5" height="5" fill="#e8141c"/><rect x="1063" y="81" width="1.5" height="36" fill="#dcdce2"/><rect x="1066.5" y="90" width="1" height="1" fill="#a8a8b0"/><rect x="1069.5" y="90" width="1" height="1" fill="#a8a8b0"/><rect x="1066.5" y="93" width="1" height="1" fill="#a8a8b0"/><rect x="1069.5" y="93" width="1" height="1" fill="#a8a8b0"/><rect x="1066.5" y="96" width="1" height="1" fill="#a8a8b0"/><rect x="1069.5" y="96" width="1" height="1" fill="#a8a8b0"/><rect x="1066.5" y="99" width="1" height="1" fill="#a8a8b0"/><rect x="1069.5" y="99" width="1" height="1" fill="#a8a8b0"/><rect x="1066.5" y="102" width="1" height="1" fill="#a8a8b0"/><rect x="1069.5" y="102" width="1" height="1" fill="#a8a8b0"/><rect x="1066.5" y="105" width="1" height="1" fill="#a8a8b0"/><rect x="1069.5" y="105" width="1" height="1" fill="#a8a8b0"/><rect x="1075.5" y="88.7" width="165" height="20.9" rx="3" fill="#fff" stroke="#adadb3" stroke-width="1"/><path d="M1083.5,100 L1087,103.5 L1093.5,96" fill="none" stroke="#000" stroke-width="1.6"/><text x="1099" y="104" font-family='"Liberation Sans", sans-serif' font-size="12.3" fill="#1a1a1a">Untagged</text><path d="M1225,97.5 H1233 L1229,101.5Z" fill="#6a6a6a"/><rect x="1244" y="81" width="1.5" height="36" fill="#dcdce2"/><rect x="1247" y="90" width="1" height="1" fill="#a8a8b0"/><rect x="1250" y="90" width="1" height="1" fill="#a8a8b0"/><rect x="1247" y="93" width="1" height="1" fill="#a8a8b0"/><rect x="1250" y="93" width="1" height="1" fill="#a8a8b0"/><rect x="1247" y="96" width="1" height="1" fill="#a8a8b0"/><rect x="1250" y="96" width="1" height="1" fill="#a8a8b0"/><rect x="1247" y="99" width="1" height="1" fill="#a8a8b0"/><rect x="1250" y="99" width="1" height="1" fill="#a8a8b0"/><rect x="1247" y="102" width="1" height="1" fill="#a8a8b0"/><rect x="1250" y="102" width="1" height="1" fill="#a8a8b0"/><rect x="1247" y="105" width="1" height="1" fill="#a8a8b0"/><rect x="1250" y="105" width="1" height="1" fill="#a8a8b0"/><g fill="none" stroke="#10108c" stroke-linecap="round"><path d="M1271,87.5 C1269,84 1265,83.2 1262,85 C1258,87.5 1256.3,91 1257,95 C1258,99 1261,101 1265,101 C1268,101 1271,99 1271,96.5 C1271,94 1268,94 1267.3,96" stroke-width="1.7"/><path d="M1258.3,89 C1257,92 1257.2,96 1259,98.5" stroke-width="2.6"/><path d="M1271,87.5 C1272,90 1269,91.2 1267.5,89.8 C1266.5,88.3 1268.5,87 1270,88.5" stroke-width="1.5"/><path d="M1274.5,92.5 C1275,90.5 1279,89.5 1280.8,92 C1282.3,94.5 1279.5,97 1276.5,97.5 C1279.5,97.5 1282.3,99.3 1281.8,102.5 C1281.2,106.5 1276,108.3 1274.6,107 C1273.6,105.5 1277,101.5 1282,99.5 L1284.5,98" stroke-width="1.8"/></g><rect x="1256.3" y="108.8" width="30" height="2.1" rx="1" fill="#ff10c8"/><rect x="1290.25" y="89" width="1.5" height="20" fill="#888"/><rect x="1295.5" y="81" width="1.5" height="33" fill="#dcdce2"/><rect x="1299" y="90" width="1" height="1" fill="#a8a8b0"/><rect x="1302" y="90" width="1" height="1" fill="#a8a8b0"/><rect x="1299" y="93" width="1" height="1" fill="#a8a8b0"/><rect x="1302" y="93" width="1" height="1" fill="#a8a8b0"/><rect x="1299" y="96" width="1" height="1" fill="#a8a8b0"/><rect x="1302" y="96" width="1" height="1" fill="#a8a8b0"/><rect x="1299" y="99" width="1" height="1" fill="#a8a8b0"/><rect x="1302" y="99" width="1" height="1" fill="#a8a8b0"/><rect x="1299" y="102" width="1" height="1" fill="#a8a8b0"/><rect x="1302" y="102" width="1" height="1" fill="#a8a8b0"/><rect x="1299" y="105" width="1" height="1" fill="#a8a8b0"/><rect x="1302" y="105" width="1" height="1" fill="#a8a8b0"/><defs><radialGradient id="rockg" cx="0.5" cy="0.5" r="0.6"><stop offset="0" stop-color="#fff"/><stop offset="1" stop-color="#e8b0a0"/></radialGradient></defs><path d="M1314,92 C1320,87 1330,86 1333.5,90 C1335,96 1333,103 1325,109.5 C1320,110 1316,106 1312,99 L1314.5,97 Z" fill="url(#rockg)" stroke="#111" stroke-width="1.2"/><path d="M1318.5,91 C1319,96 1317,101 1319,108 M1324,89 C1324,95 1322,99 1324,106 M1329,89 C1331,95 1328,100 1330,104" fill="none" stroke="#333" stroke-width="0.7"/><path d="M1348,101 C1348,88 1361,85 1363,105" fill="none" stroke="#f06060" stroke-width="1.1"/><path d="M1343.5,98 H1351 L1353,105 H1343.5Z" fill="#20a050" stroke="#111" stroke-width="0.8"/><ellipse cx="1361.5" cy="106" rx="4.5" ry="4" fill="#f0b800" stroke="#333" stroke-width="0.8"/><path d="M1390,86.5 L1399.5,101 C1398,106 1392,110 1386,110 C1380,109 1376,104 1376,99 C1377,95 1381,92 1385,92 Z" fill="none" stroke="#20a020" stroke-width="1"/><path d="M1385,92 L1387,101 L1399.5,101 M1387,101 L1378,104 M1387,101 L1392,110 M1380,93 L1384,99 L1376,99 M1390,86.5 L1387,101" fill="none" stroke="#20a020" stroke-width="0.9"/><rect x="1405.5" y="81" width="1.5" height="33" fill="#dcdce2"/><rect x="1409" y="90" width="1" height="1" fill="#a8a8b0"/><rect x="1412" y="90" width="1" height="1" fill="#a8a8b0"/><rect x="1409" y="93" width="1" height="1" fill="#a8a8b0"/><rect x="1412" y="93" width="1" height="1" fill="#a8a8b0"/><rect x="1409" y="96" width="1" height="1" fill="#a8a8b0"/><rect x="1412" y="96" width="1" height="1" fill="#a8a8b0"/><rect x="1409" y="99" width="1" height="1" fill="#a8a8b0"/><rect x="1412" y="99" width="1" height="1" fill="#a8a8b0"/><rect x="1409" y="102" width="1" height="1" fill="#a8a8b0"/><rect x="1412" y="102" width="1" height="1" fill="#a8a8b0"/><rect x="1409" y="105" width="1" height="1" fill="#a8a8b0"/><rect x="1412" y="105" width="1" height="1" fill="#a8a8b0"/><rect x="1418" y="92" width="4" height="15" fill="#909090"/><rect x="1443" y="92" width="5" height="15" fill="#909090"/><path d="M1436,92 L1446,107 H1443Z" fill="#909090"/><path d="M1427.5,92 H1434 L1440,107 H1427.5Z" fill="#333"/><path d="M1425,88 H1437 L1446,110 H1417Z" fill="none" stroke="#e03838" stroke-width="1.2"/><circle cx="1425" cy="88" r="2.1" fill="#fff" stroke="#e03838" stroke-width="1"/><circle cx="1437" cy="88" r="2.1" fill="#fff" stroke="#e03838" stroke-width="1"/><rect x="1451.5" y="81" width="1.5" height="33" fill="#dcdce2"/><rect x="1455" y="90" width="1" height="1" fill="#a8a8b0"/><rect x="1458" y="90" width="1" height="1" fill="#a8a8b0"/><rect x="1455" y="93" width="1" height="1" fill="#a8a8b0"/><rect x="1458" y="93" width="1" height="1" fill="#a8a8b0"/><rect x="1455" y="96" width="1" height="1" fill="#a8a8b0"/><rect x="1458" y="96" width="1" height="1" fill="#a8a8b0"/><rect x="1455" y="99" width="1" height="1" fill="#a8a8b0"/><rect x="1458" y="99" width="1" height="1" fill="#a8a8b0"/><rect x="1455" y="102" width="1" height="1" fill="#a8a8b0"/><rect x="1458" y="102" width="1" height="1" fill="#a8a8b0"/><rect x="1455" y="105" width="1" height="1" fill="#a8a8b0"/><rect x="1458" y="105" width="1" height="1" fill="#a8a8b0"/><g transform="translate(1464,84)"><path d="M4,12.5 L12.5,16.5 V25.5 L4,19.5Z" fill="#a08868" stroke="#3a3a3a" stroke-width="0.8"/><path d="M20.5,16.5 L26,11.5 V17 L20.5,25.5Z" fill="#6a5a48" stroke="#3a3a3a" stroke-width="0.8"/><path d="M9.5,7.5 L14.5,4.3 L23.5,5 L17.5,10.5Z" fill="#e6c898" stroke="#3a3a3a" stroke-width="0.8"/><path d="M4,11.5 C5,9 7,8 9.5,7.5 L17.5,10.5 L13,16.5 L4,12.5Z" fill="#f2b814" stroke="#3a3a3a" stroke-width="0.8"/><path d="M17.5,10.5 L23.5,5 C25,6 26,8.5 26,11.5 L20.5,16.5Z" fill="#f2b814" stroke="#3a3a3a" stroke-width="0.8"/><path d="M12.5,16.5 H20.5 V25.5 H12.5Z" fill="#f2b814" stroke="#3a3a3a" stroke-width="0.8"/><circle cx="16.5" cy="14.5" r="3.4" fill="#f2b814" stroke="#3a3a3a" stroke-width="0.7"/></g><g transform="translate(1496,84)"><path d="M4,12.5 L12.5,16.5 V25.5 L4,19.5Z" fill="#a08868" stroke="#3a3a3a" stroke-width="0.8"/><path d="M20.5,16.5 L26,11.5 V17 L20.5,25.5Z" fill="#6a5a48" stroke="#3a3a3a" stroke-width="0.8"/><path d="M9.5,7.5 L14.5,4.3 L23.5,5 L17.5,10.5Z" fill="#e6c898" stroke="#3a3a3a" stroke-width="0.8"/><path d="M4,11.5 C5,9 7,8 9.5,7.5 L17.5,10.5 L13,16.5 L4,12.5Z" fill="#c4d4f8" stroke="#3a3a3a" stroke-width="0.8"/><path d="M17.5,10.5 L23.5,5 C25,6 26,8.5 26,11.5 L20.5,16.5Z" fill="#c4d4f8" stroke="#3a3a3a" stroke-width="0.8"/><path d="M12.5,16.5 H20.5 V25.5 H12.5Z" fill="#c4d4f8" stroke="#3a3a3a" stroke-width="0.8"/><path d="M12.5,16.5 L17.5,10.5 L20.5,16.5Z" fill="#c4d4f8" stroke="#3a3a3a" stroke-width="0.7"/></g><g transform="translate(1528,84)"><path d="M4,12.5 L12.5,16.5 V25.5 L4,19.5Z" fill="#a08868" stroke="#3a3a3a" stroke-width="0.8"/><path d="M20.5,16.5 L26,11.5 V17 L20.5,25.5Z" fill="#6a5a48" stroke="#3a3a3a" stroke-width="0.8"/><path d="M9.5,7.5 L14.5,4.3 L23.5,5 L17.5,10.5Z" fill="#e6c898" stroke="#3a3a3a" stroke-width="0.8"/><path d="M4,11.5 C5,9 7,8 9.5,7.5 L17.5,10.5 L13,16.5 L4,12.5Z" fill="#c8dca8" stroke="#3a3a3a" stroke-width="0.8"/><path d="M17.5,10.5 L23.5,5 C25,6 26,8.5 26,11.5 L20.5,16.5Z" fill="#c8dca8" stroke="#3a3a3a" stroke-width="0.8"/><path d="M12.5,16.5 H20.5 V25.5 H12.5Z" fill="#c8dca8" stroke="#3a3a3a" stroke-width="0.8"/><path d="M12.5,16.5 L17.5,10.5 L20.5,16.5Z" fill="#c8dca8" stroke="#3a3a3a" stroke-width="0.7"/></g><rect x="1561.5" y="81" width="1.5" height="36" fill="#dcdce2"/><rect x="1565" y="90" width="1" height="1" fill="#a8a8b0"/><rect x="1568" y="90" width="1" height="1" fill="#a8a8b0"/><rect x="1565" y="93" width="1" height="1" fill="#a8a8b0"/><rect x="1568" y="93" width="1" height="1" fill="#a8a8b0"/><rect x="1565" y="96" width="1" height="1" fill="#a8a8b0"/><rect x="1568" y="96" width="1" height="1" fill="#a8a8b0"/><rect x="1565" y="99" width="1" height="1" fill="#a8a8b0"/><rect x="1568" y="99" width="1" height="1" fill="#a8a8b0"/><rect x="1565" y="102" width="1" height="1" fill="#a8a8b0"/><rect x="1568" y="102" width="1" height="1" fill="#a8a8b0"/><rect x="1565" y="105" width="1" height="1" fill="#a8a8b0"/><rect x="1568" y="105" width="1" height="1" fill="#a8a8b0"/><g transform="translate(1577,87)"><path d="M1,18 L8,13 L14,15.5 L19,12 L24,15 L16,22.5 Z" fill="#f0f0e0" stroke="#000" stroke-width="1.5" stroke-linejoin="round"/><path d="M1,14 L8,9 L14,11.5 L19,8 L24,11 L16,18.5 Z" fill="#f0f0e0" stroke="#000" stroke-width="1.5" stroke-linejoin="round"/><path d="M1,10 L8,5 L14,7.5 L19,1.5 L24,6 L16,14.5 Z" fill="#fff" stroke="#000" stroke-width="1.5" stroke-linejoin="round"/><path d="M2,19 L16,23.5" stroke="#5ac8f0" stroke-width="1" opacity="0.7"/></g><text x="1583" y="100.5" font-family='"Liberation Sans", sans-serif' font-size="11.5" font-weight="bold" fill="#e8141c" stroke="#e8141c" stroke-width="0.4">S</text><rect x="1" y="118" width="67" height="751" fill="#f0f0f5" stroke="#dcdce2" stroke-width="1"/><rect x="27" y="120.5" width="1" height="1" fill="#a8a8b0"/><rect x="27" y="123.5" width="1" height="1" fill="#a8a8b0"/><rect x="30" y="120.5" width="1" height="1" fill="#a8a8b0"/><rect x="30" y="123.5" width="1" height="1" fill="#a8a8b0"/><rect x="33" y="120.5" width="1" height="1" fill="#a8a8b0"/><rect x="33" y="123.5" width="1" height="1" fill="#a8a8b0"/><rect x="36" y="120.5" width="1" height="1" fill="#a8a8b0"/><rect x="36" y="123.5" width="1" height="1" fill="#a8a8b0"/><rect x="39" y="120.5" width="1" height="1" fill="#a8a8b0"/><rect x="39" y="123.5" width="1" height="1" fill="#a8a8b0"/><rect x="42" y="120.5" width="1" height="1" fill="#a8a8b0"/><rect x="42" y="123.5" width="1" height="1" fill="#a8a8b0"/><rect x="3.5" y="129.5" width="30" height="29.5" rx="3.5" fill="#dbe9f7" stroke="#4a8ed8" stroke-width="1.1"/><g transform="translate(5.800000000000001,131.8)"><path d="M8,5 L8,19 L11,16 L13.5,21 L15.5,20 L13,15 L17,15Z" fill="#1d4f86"/></g><g transform="translate(37.8,131.8)"><path d="M10,14 C3,16 3,22 8,23 C14,24 21,18 20,12 C19,8 15,8 14,9" fill="none" stroke="#2a9bd8" stroke-width="1.3" stroke-dasharray="2,1.5"/><path d="M6,1 L6,13 L9,10.5 L11,15 L13,14 L11,10 L14.5,9.5Z" fill="#1d4f86"/></g><g transform="translate(5.800000000000001,164)"><path d="M9.8,4.6 L19.3,10.6 L20.6,13.6 L13.5,20.4 L6.2,14 Z" fill="#d6ecf8" stroke="#1d4f86" stroke-width="1.3" stroke-linejoin="round"/><ellipse cx="17.5" cy="7" rx="2.6" ry="3.8" fill="none" stroke="#1d4f86" stroke-width="1.2" transform="rotate(35 17.5 7)"/><path d="M3.5,17.5 C3,12 6,6 10.5,5" fill="none" stroke="#2a9bd8" stroke-width="3" stroke-linecap="round"/></g><g transform="translate(37.8,164)"><path d="M2,15 L14.4,2.6 L20.9,9 L8.4,20.4 Z" fill="#d6ecf8" stroke="#1d4f86" stroke-width="1.3" stroke-linejoin="round"/><path d="M6.3,10.8 L10.8,6.3 L16.8,12.6 L12.3,16.8Z" fill="#2a9bd8"/><path d="M2,10.8 L6.3,10.8" stroke="none"/><path d="M3.2,22 H21.6" stroke="#5ab8e8" stroke-width="2"/></g><g transform="translate(5.800000000000001,197)"><path d="M7.5,5 L11.5,3 L15.5,5 V10 L11.5,12 L7.5,10Z M7.5,5 L11.5,7 L15.5,5 M11.5,7 V12" fill="none" stroke="#1d4f86" stroke-width="1.2"/><path d="M3.5,13 L7.5,11 L11.5,13 V18 L7.5,20 L3.5,18Z M3.5,13 L7.5,15 L11.5,13 M7.5,15 V20" fill="none" stroke="#1d4f86" stroke-width="1.2"/><path d="M11.5,13 L15.5,11 L19.5,13 V18 L15.5,20 L11.5,18Z M11.5,13 L15.5,15 L19.5,13 M15.5,15 V20" fill="none" stroke="#1d4f86" stroke-width="1.2"/></g><g transform="translate(37.8,197)"><path d="M4.8,13.9 L14.4,4.3 L21.7,11.9 L12.7,21.2 H5 Z" fill="#d6ecf8" stroke="#1d4f86" stroke-width="1.4" stroke-linejoin="round"/><circle cx="8.3" cy="18" r="1.1" fill="none" stroke="#2a9bd8" stroke-width="0.9"/></g><g transform="translate(5.800000000000001,233.5)"><path d="M6.5,17.5 L18.5,4.5 L21,7 L9,19.5Z" fill="#fff" stroke="#ee1c24" stroke-width="1.4" stroke-linejoin="round"/><path d="M3,22 L6.5,17.5 L9,19.5Z" fill="#1d4f86"/><path d="M17.5,5.5 L20,8" stroke="#ee1c24" stroke-width="1"/></g><g transform="translate(37.8,233.5)"><path d="M5,20 C3,15 8,13 11,16 C14,19 20,18 16,13 C12,8 8,7 11,4.5 C13,3 17,6 19.5,4" fill="none" stroke="#2a9bd8" stroke-width="1.4"/><circle cx="5" cy="20" r="1.8" fill="#1d4f86"/><circle cx="19.5" cy="4" r="2.4" fill="#ee1c24"/></g><g transform="translate(5.800000000000001,265.7)"><rect x="3.5" y="4" width="16" height="16" fill="#d6ecf8" stroke="#2a9bd8" stroke-width="1.2"/><path d="M3.5,20 L19.5,4" stroke="#1d4f86" stroke-width="1"/><circle cx="3.5" cy="20" r="1.8" fill="#1d4f86"/><circle cx="19.5" cy="4" r="2.4" fill="#ee1c24"/></g><g transform="translate(37.8,265.7)"><rect x="5" y="3.5" width="15" height="16.5" fill="#d6ecf8" stroke="#2a9bd8" stroke-width="1.2"/><path d="M5,6 C13,6 19,12 19,20" fill="none" stroke="#1d4f86" stroke-width="1.2"/><path d="M5,6 V20 H19" fill="none" stroke="#1d4f86" stroke-width="1.2"/><circle cx="5" cy="6" r="2.6" fill="#ee1c24"/><circle cx="5" cy="20" r="1.8" fill="#1d4f86"/><circle cx="19" cy="20" r="1.8" fill="#1d4f86"/></g><g transform="translate(5.800000000000001,298)"><circle cx="11" cy="13" r="8.5" fill="#d6ecf8" stroke="#2a9bd8" stroke-width="1.3"/><path d="M11,13 L18,6" stroke="#1d4f86" stroke-width="1.1"/><circle cx="11" cy="13" r="1.8" fill="#1d4f86"/><circle cx="18" cy="6" r="2.4" fill="#ee1c24"/></g><g transform="translate(37.8,298)"><path d="M7,5 H16 L21,13 L16,21 H7 L2,13Z" fill="#d6ecf8" stroke="#2a9bd8" stroke-width="1.3"/><path d="M11.5,13 L16,5" stroke="#1d4f86" stroke-width="1.1"/><circle cx="11.5" cy="13" r="1.8" fill="#1d4f86"/><circle cx="16" cy="5" r="2.4" fill="#ee1c24"/></g><g transform="translate(5.800000000000001,329.4)"><path d="M4,21 C13,20 19,14 19,5" fill="none" stroke="#2a9bd8" stroke-width="1.5"/><path d="M4,4 V21 L19,5" fill="none" stroke="#1d4f86" stroke-width="1.1"/><circle cx="4" cy="4" r="1.8" fill="#1d4f86"/><circle cx="4" cy="21" r="1.8" fill="#1d4f86"/><circle cx="19" cy="5" r="2.4" fill="#ee1c24"/></g><g transform="translate(37.8,329.4)"><path d="M5.3,6.4 C8,3 16,2.5 19.6,6.8" fill="none" stroke="#2a9bd8" stroke-width="1.5"/><path d="M5.3,6.4 C2.5,10 2.5,17 6,20.9" fill="none" stroke="#2a9bd8" stroke-width="1.5"/><path d="M19.6,6.8 L6,20.9 M11.8,14.3 L8,9.5" fill="none" stroke="#1d4f86" stroke-width="1.1"/><circle cx="5.3" cy="6.4" r="2.4" fill="#ee1c24"/><circle cx="19.6" cy="6.8" r="1.8" fill="#1d4f86"/><circle cx="6" cy="20.9" r="1.8" fill="#1d4f86"/></g><g transform="translate(5.800000000000001,361)"><path d="M13,4.6 C19,6 23,12 20,19.7 C17,23 9,22.5 4.6,15.7" fill="none" stroke="#2a9bd8" stroke-width="1.5"/><path d="M10.2,5.3 L20,19.7 L4.6,15.7" fill="none" stroke="#1d4f86" stroke-width="1.1"/><circle cx="10.2" cy="5.3" r="2.4" fill="#ee1c24"/><circle cx="4.6" cy="15.7" r="1.8" fill="#1d4f86"/><circle cx="20" cy="19.7" r="1.8" fill="#1d4f86"/></g><g transform="translate(37.8,361)"><path d="M3.9,5.3 H19.6 C19.6,13 13,20 3.9,20 Z" fill="#d6ecf8" stroke="none"/><path d="M19.6,5.8 C19.6,13 13,20 3.9,20" fill="none" stroke="#2a9bd8" stroke-width="1.5"/><path d="M3.9,5.3 H19.6 M3.9,5.3 V20 M3.9,20 L19.6,5.8" fill="none" stroke="#1d4f86" stroke-width="1.1"/><circle cx="3.9" cy="5.3" r="1.8" fill="#1d4f86"/><circle cx="3.9" cy="20" r="1.8" fill="#1d4f86"/><circle cx="19.6" cy="5.8" r="2.4" fill="#ee1c24"/></g><g transform="translate(5.800000000000001,400)"><path d="M12,2 V22 M2,12 H22" stroke="#ee1c24" stroke-width="1.6"/><path d="M12,1 L8,6 H16Z M12,23 L8,18 H16Z M1,12 L6,8 V16Z M23,12 L18,8 V16Z" fill="#ee1c24"/><circle cx="12" cy="12" r="1.8" fill="#1d4f86"/></g><g transform="translate(37.8,400)"><path d="M1,15 L12,9 L23,15 L12,21Z" fill="#d6ecf8" stroke="#2a9bd8" stroke-width="1.5"/><path d="M1,15 V17 L12,23 L23,17 V15" fill="none" stroke="#2a9bd8" stroke-width="1.5"/><path d="M10,15 V7 H6 L12,1 L18,7 H14 V15Z" fill="#ee1c24"/></g><g transform="translate(5.800000000000001,432.8)"><path d="M5,9 C7,4 14,2 18,6 M19,15 C17,20 10,22 6,18" fill="none" stroke="#ee1c24" stroke-width="1.8"/><path d="M14,3 L20,5 L18,10Z M10,21 L4,19 L6,14Z" fill="#ee1c24"/></g><g transform="translate(37.8,432.8)"><path d="M4,8 C6,3 12,2 14,4 L11,8 C9,9 9,12 11,15 L14,17 L9,21 C4,19 2,14 4,8Z" fill="#d6ecf8" stroke="#2a9bd8" stroke-width="1.3"/><path d="M11,4 C15,1 20,3 20,7" fill="none" stroke="#1d4f86" stroke-width="1.2"/><circle cx="21" cy="8" r="2.4" fill="#ee1c24"/></g><g transform="translate(5.800000000000001,464)"><rect x="1.4" y="1.9" width="21.4" height="20" fill="#d6ecf8" stroke="#2a9bd8" stroke-width="1.5"/><path d="M1.4,8.3 H15.7 V21.9" fill="none" stroke="#1d4f86" stroke-width="2"/><path d="M1.4,8.3 V21.9 H15.7" fill="none" stroke="#1d4f86" stroke-width="1.6"/><path d="M11,15 L17,9" stroke="#ee1c24" stroke-width="3.2"/><path d="M21.8,3.6 L12.5,6.5 L19,13Z" fill="#ee1c24"/></g><g transform="translate(37.8,464)"><path d="M3,15 C3,8 8,4 14,5 M19,11 C20,15 18,20 15,22" fill="none" stroke="#2a9bd8" stroke-width="1.5"/><path d="M6,20 C5,13 9,9 13,9" fill="none" stroke="#1d4f86" stroke-width="1.5"/><path d="M10,15 L18,7" stroke="#ee1c24" stroke-width="2.3"/><path d="M21,3 L14,5 L19,10Z" fill="#ee1c24"/></g><g transform="translate(5.800000000000001,496.5)"><path d="M12,12 V2 M12,12 L21,6" stroke="#2a9bd8" stroke-width="1.2"/><path d="M12,2 L10,6 H14Z" fill="#2a9bd8"/><path d="M12,12 L21,7" stroke="#3a9a3a" stroke-width="1.3"/><path d="M22,5 L17,6 L19,9Z" fill="#3a9a3a"/><path d="M12,12 L20,19" stroke="#ee1c24" stroke-width="1.3"/><path d="M22,21 L16,19 L19,16Z" fill="#ee1c24"/><path d="M12,12 L3,6 M12,12 L4,18 M12,12 V22" stroke="#777" stroke-width="0.8" stroke-dasharray="1.2,1.2"/><circle cx="12" cy="12" r="2.8" fill="#1d4f86"/></g><g transform="translate(37.8,496.5)"><path d="M11,3 L2,20 H11Z" fill="#fff" stroke="#1d4f86" stroke-width="1.4" stroke-linejoin="round"/><path d="M13,3 L22,20 H13Z" fill="#d6ecf8" stroke="#2a9bd8" stroke-width="1.4" stroke-linejoin="round"/><path d="M12,2 V22" stroke="#ee1c24" stroke-width="1.2" stroke-dasharray="1.5,1" opacity="0.8"/></g><g transform="translate(5.800000000000001,533)"><path d="M5.5,9 C5,5 9,3 14,3.5 C19,4 21,7.5 20.5,12 C20,15 17,17 13,17.5 C9,18 6,16 5.5,12Z" fill="#d6ecf8" stroke="#1d4f86" stroke-width="1.6" transform="rotate(-20 13 10)"/><path d="M8,17.5 L3,21" stroke="#1d4f86" stroke-width="1.3"/><circle cx="12.8" cy="10.3" r="3.3" fill="#ee1c24"/></g><g transform="translate(37.8,533)"><path d="M3,11 L16,3 M4,17 L19,7 M4,6 L8,13 M13,3 L17,10" stroke="#1d4f86" stroke-width="1.2"/><circle cx="9" cy="19" r="2.5" fill="#ee1c24"/><circle cx="20" cy="15" r="2.4" fill="#ee1c24"/><text x="6" y="9" font-size="6" fill="#1d4f86" transform="rotate(-30 6 9)">5</text></g><g transform="translate(5.800000000000001,565)"><path d="M5.1,21.9 A11.3,11.3 0 0 1 21.8,6.6 Z" fill="#d6ecf8" stroke="#1d4f86" stroke-width="1.6" stroke-linejoin="round"/><path d="M8.3,18.9 A7.3,7.3 0 0 1 18.7,9.6" fill="none" stroke="#1d4f86" stroke-width="1.1"/><path d="M6.8,14 L9,15 M9,9.5 L10.8,11.2 M13.5,6.8 L14.2,9" stroke="#1d4f86" stroke-width="0.8"/></g><g transform="translate(37.8,565)"><rect x="7.5" y="2.5" width="14" height="12" fill="#fff" stroke="#1d4f86" stroke-width="1.3"/><text x="9" y="12" font-family="Liberation Serif, serif" font-size="8" fill="#1d4f86">A1</text><path d="M7.5,8 H3.5 V20" fill="none" stroke="#1d4f86" stroke-width="1.2"/><path d="M3.5,22 L1.5,18 H5.5Z" fill="#1d4f86"/></g><g transform="translate(5.800000000000001,597)"><circle cx="11" cy="12" r="8.5" fill="#fff" stroke="#1d4f86" stroke-width="1.5"/><path d="M1,12 H21" stroke="#1d4f86" stroke-width="1.2"/><path d="M23,12 L19,8 V16Z" fill="#1d4f86"/><text x="8" y="10" font-size="5" fill="#1d4f86">C</text><text x="6" y="18" font-size="4.5" fill="#1d4f86">A-B</text></g><g transform="translate(37.8,597)"><path d="M6,21 L12,2 H14 L20,21 M8.5,14 H17" fill="none" stroke="#2a9bd8" stroke-width="2.4"/><path d="M5,21 L11,2 M9,13 H15" fill="none" stroke="#1d4f86" stroke-width="1.1"/></g><g transform="translate(5.800000000000001,635.8)"><path d="M4.5,9.5 C1,11 1.5,14 7,15.3" fill="none" stroke="#ee1c24" stroke-width="3.2"/><path d="M16,15.3 C22,14 23,11 19.5,9.3 C17,8.3 14,8 12,8" fill="none" stroke="#ee1c24" stroke-width="3.2"/><path d="M6,12.5 L10.5,15.5 L6,18.5Z M13,5 L9.5,8 L13,11Z" fill="#ee1c24"/><path d="M11.6,2 V20.8" stroke="#1d4f86" stroke-width="1.4"/></g><g transform="translate(37.8,635.8)"><path d="M9,22 C6,19.5 5,17 5.5,14.5 L8.5,16 V8 C8.5,6 11.5,6 11.5,8 V13 V7 C11.5,5 14.5,5 14.5,7 V13 V9 C14.5,7 17.5,7 17.5,9 V14 C19.5,14 20.5,16 19.5,19 L17,23 Z" fill="#d6ecf8" stroke="#1d4f86" stroke-width="1.2" stroke-linejoin="round"/><path d="M6.5,4.8 H18.5" stroke="#ee1c24" stroke-width="1.8"/><path d="M4.5,4.8 L8.5,1.8 V7.8Z M20.9,4.8 L16.9,1.8 V7.8Z" fill="#ee1c24"/></g><g transform="translate(5.800000000000001,667.5)"><circle cx="14" cy="9" r="6.5" fill="none" stroke="#1d4f86" stroke-width="1.6"/><path d="M9.5,13.5 L3,20" stroke="#1d4f86" stroke-width="2.6"/></g><g transform="translate(37.8,667.5)"><rect x="1.5" y="1.5" width="21" height="21" fill="none" stroke="#2a9bd8" stroke-width="1.2" stroke-dasharray="1.3,1"/><circle cx="13.5" cy="10" r="5.8" fill="none" stroke="#1d4f86" stroke-width="1.6"/><path d="M9.5,14 L4,19.5" stroke="#1d4f86" stroke-width="2.6"/></g><g transform="translate(5.800000000000001,700.5)"><circle cx="11" cy="11" r="5" fill="none" stroke="#1d4f86" stroke-width="1.6"/><path d="M7.5,14.5 L2,20" stroke="#1d4f86" stroke-width="2.4"/><path d="M2,2 L6,6 M20,2 L16,6 M16,16 L20,20" stroke="#ee1c24" stroke-width="1.6"/><path d="M1,1 H6 L1,6Z M21,1 H16 L21,6Z M21,21 H16 L21,16Z" fill="#ee1c24"/></g><g transform="translate(37.8,700.5)"><path d="M3,8 H7 L9,5 H14 L16,8 H20 V17 H3Z" fill="#fff" stroke="#1d4f86" stroke-width="1.3"/><path d="M11,12 C17,11 22,14 20,19 C19,21 16,22 12,21" fill="none" stroke="#ee1c24" stroke-width="1.5"/><path d="M9,12 L14,9 V15Z" fill="#ee1c24"/></g><g transform="translate(5.800000000000001,738)"><rect x="5" y="4" width="13" height="9" rx="1.5" fill="#fff" stroke="#1d4f86" stroke-width="1.3"/><path d="M8,4 L9,2 H14 L15,4" fill="none" stroke="#1d4f86" stroke-width="1.2"/><circle cx="11.5" cy="8.5" r="2.6" fill="#ee1c24"/><path d="M8,13 L5,21 M15,13 L18,21 M11.5,13 V20" stroke="#1d4f86" stroke-width="1.3"/><ellipse cx="11.5" cy="22" rx="6" ry="1.2" fill="#ccc"/></g><g transform="translate(37.8,738)"><circle cx="12" cy="2.8" r="2.3" fill="#1d4f86"/><path d="M10,6 H14 L15,13 L18,22 H16 L13,15 L10,22 H7.5 L10,13Z" fill="#1d4f86"/><rect x="7" y="7" width="3" height="6" rx="1" fill="#ee1c24"/><path d="M17,7 V22" stroke="#2a9bd8" stroke-width="1"/><path d="M4,22.5 H21" stroke="#1d4f86" stroke-width="0.9"/></g><g transform="translate(5.800000000000001,769.6)"><circle cx="14.4" cy="13.5" r="7" fill="#fff" stroke="#1d4f86" stroke-width="1.6"/><circle cx="14.4" cy="14" r="4.6" fill="#2a9bd8"/><circle cx="14.4" cy="14" r="1.6" fill="#fff"/><path d="M7.5,10.5 C8.5,5 20,4 22,10.5 Z" fill="#1d4f86"/><path d="M2.3,8 L8.5,10 M3,11.5 L8,10.5 M4.5,6.5 L9,9.5" stroke="#1d4f86" stroke-width="1.4"/></g><g transform="translate(37.8,769.6)"><path d="M20,3 L2.5,13.5 L20,22" fill="none" stroke="#1d4f86" stroke-width="1.3" stroke-dasharray="0"/><path d="M2.5,13.5 L15.5,6.5 M2.5,13.5 L15.5,20" stroke="#1d4f86" stroke-width="1.5"/><path d="M14.5,7.5 C12.5,10 12.5,17 14.5,19.5" fill="none" stroke="#2a9bd8" stroke-width="1.6"/><path d="M19.5,6 C21.5,10 21.5,17 19.5,21" fill="none" stroke="#2a9bd8" stroke-width="1.8"/></g><g transform="translate(5.800000000000001,808.6)"><path d="M11,0.5 L21,5.5 V16 L11,21.5 L1,16 V5.5Z" fill="none" stroke="#1a5a9a" stroke-width="2.2"/><path d="M11,4 L17.5,7.5 V14.5 L11,18 L4.5,14.5 V7.5Z" fill="none" stroke="#1a5a9a" stroke-width="1.6"/><path d="M8,9 L11,7.5 L14,9 V13 L11,14.5 L8,13Z M8,9 L11,10.5 L14,9 M11,10.5 V14.5" fill="none" stroke="#1a5a9a" stroke-width="1"/><path d="M16.5,11 H20.5 V18 H24 L18.5,24 L13,18 H16.5Z" fill="#fff" stroke="#1a5a9a" stroke-width="1.4" stroke-linejoin="round"/></g><g transform="translate(37.8,808.6)"><path d="M1.5,2 L11,8 L21.5,2 M1.5,14 L11,8 L21.5,14" fill="none" stroke="#1a5a9a" stroke-width="3.2"/><path d="M2,5 L11,10.5 M2,17 L10,12" fill="none" stroke="#1a5a9a" stroke-width="1.2"/><circle cx="19" cy="17.5" r="5.3" fill="#fff" stroke="#1a5a9a" stroke-width="1.5"/><path d="M16.5,16.5 C17,14.5 20.5,14.5 21.5,16.5 M21.5,18.5 C21,20.5 17.5,20.5 16.5,18.5" fill="none" stroke="#1a5a9a" stroke-width="1"/></g><g transform="translate(5.800000000000001,841.7)"><path d="M1.5,16 L10.5,11 L19.5,16 L10.5,21Z" fill="#fff" stroke="#1a5a9a" stroke-width="2"/><path d="M1.5,12 L10.5,7 L19.5,12 L10.5,17Z" fill="#fff" stroke="#1a5a9a" stroke-width="2"/><path d="M1.5,8 L10.5,3 L19.5,8 L10.5,13Z" fill="#fff" stroke="#1a5a9a" stroke-width="2"/><path d="M7.5,8 L10.5,6.5 L13.5,8 L10.5,9.5Z" fill="none" stroke="#1a5a9a" stroke-width="1.2"/><path d="M12.5,16 H18 V12.5 L24,17.5 L18,22.5 V19 H12.5Z" fill="#fff" stroke="#1a5a9a" stroke-width="1.4" stroke-linejoin="round"/></g><g transform="translate(37.8,841.7)"><path d="M1.5,2 L11,8 L21.5,2 M1.5,14 L11,8 L21.5,14" fill="none" stroke="#1a5a9a" stroke-width="3.2"/><path d="M2,5 L11,10.5 M2,17 L10,12" fill="none" stroke="#1a5a9a" stroke-width="1.2"/><rect x="18" y="11.3" width="2.2" height="3" fill="#1a5a9a" transform="rotate(0 19.1 18)"/><rect x="18" y="11.3" width="2.2" height="3" fill="#1a5a9a" transform="rotate(45 19.1 18)"/><rect x="18" y="11.3" width="2.2" height="3" fill="#1a5a9a" transform="rotate(90 19.1 18)"/><rect x="18" y="11.3" width="2.2" height="3" fill="#1a5a9a" transform="rotate(135 19.1 18)"/><rect x="18" y="11.3" width="2.2" height="3" fill="#1a5a9a" transform="rotate(180 19.1 18)"/><rect x="18" y="11.3" width="2.2" height="3" fill="#1a5a9a" transform="rotate(225 19.1 18)"/><rect x="18" y="11.3" width="2.2" height="3" fill="#1a5a9a" transform="rotate(270 19.1 18)"/><rect x="18" y="11.3" width="2.2" height="3" fill="#1a5a9a" transform="rotate(315 19.1 18)"/><circle cx="19.1" cy="18" r="4.6" fill="#fff" stroke="#1a5a9a" stroke-width="1.4"/><circle cx="19.1" cy="18" r="1.8" fill="none" stroke="#1a5a9a" stroke-width="1"/></g><rect x="8" y="226.7" width="52" height="1.8" fill="#8c8c8c"/><rect x="8" y="392.9" width="52" height="1.8" fill="#8c8c8c"/><rect x="8" y="527.0" width="52" height="1.8" fill="#8c8c8c"/><rect x="8" y="629.2" width="52" height="1.8" fill="#8c8c8c"/><rect x="8" y="731.2" width="52" height="1.8" fill="#8c8c8c"/><rect x="8" y="800.9000000000001" width="52" height="1.8" fill="#8c8c8c"/><defs><linearGradient id="tabg" x1="0" y1="0" x2="0" y2="1"><stop offset="0" stop-color="#fbfbfe"/><stop offset="1" stop-color="#eeeef4"/></linearGradient></defs><path d="M69.5,149 V123 Q69.5,120.5 72,120.5 H189 Q191.5,120.5 191.5,123 V149" fill="url(#tabg)" stroke="#8e8e92" stroke-width="1"/><text x="108" y="139" font-family='"Liberation Sans", sans-serif' font-size="12.4" fill="#3a3a3a" textLength="42.4" lengthAdjust="spacingAndGlyphs">Scene 1</text><text x="72.5" y="184.4" font-family='"Liberation Sans", sans-serif' font-size="20.4" font-weight="bold" fill="#e8374e" stroke="#e8374e" stroke-width="0.45" textLength="319" lengthAdjust="spacingAndGlyphs">Nhận thiết kế A -Z mọi lĩnh vực</text><text x="119.5" y="209.4" font-family='"Liberation Sans", sans-serif' font-size="20.4" font-weight="bold" fill="#e8374e" stroke="#e8374e" stroke-width="0.45" textLength="261.5" lengthAdjust="spacingAndGlyphs">0792 bốn ko ba 279 Zalo.</text><rect x="1250.5" y="112.5" width="228" height="57" fill="#f0f0f5" stroke="#d8d8de" stroke-width="1"/><rect x="1252.5" y="114.5" width="224" height="19" fill="#9cb4d0" stroke="#a4a4a8" stroke-width="1"/><text x="1256.3" y="129" font-family='"Liberation Sans", sans-serif' font-size="12.3" font-weight="bold" fill="#3a3a3a" textLength="122.5" lengthAdjust="spacingAndGlyphs">Keyframe Animation</text><path d="M1464,120 L1470,126 M1470,120 L1464,126" stroke="#333" stroke-width="1.1"/><defs><linearGradient id="playg" x1="0" y1="0" x2="1" y2="1"><stop offset="0" stop-color="#60a8f0"/><stop offset="1" stop-color="#1a5ac8"/></linearGradient><radialGradient id="helpg" cx="0.4" cy="0.35" r="0.7"><stop offset="0" stop-color="#7ec0f8"/><stop offset="1" stop-color="#1a60c8"/></radialGradient></defs><path d="M1257,139.5 L1278,152 L1257,164.5Z" fill="url(#playg)"/><circle cx="1300" cy="152" r="11" fill="#fff" stroke="#444" stroke-width="2.2"/><circle cx="1300" cy="152" r="4.5" fill="#e01010"/><rect x="1322" y="142" width="20" height="19.7" fill="none" stroke="#3a50c0" stroke-width="1.4" stroke-dasharray="2.4,3.2" stroke-dashoffset="-3"/><rect x="1320" y="140" width="4" height="4" fill="#3a50c0"/><rect x="1340" y="140" width="4" height="4" fill="#3a50c0"/><rect x="1320" y="159.7" width="4" height="4" fill="#3a50c0"/><rect x="1340" y="159.7" width="4" height="4" fill="#3a50c0"/><circle cx="1364" cy="152" r="11" fill="#888"/><circle cx="1364" cy="152" r="9" fill="#a8a8a8"/><path d="M1359.5,147.5 L1368.5,156.5 M1368.5,147.5 L1359.5,156.5" stroke="#fff" stroke-width="2.6"/><circle cx="1395" cy="154.5" r="8.8" fill="none" stroke="#3a4fc8" stroke-width="2.6"/><rect x="1391.5" y="140.5" width="7" height="3" fill="#3a4fc8"/><path d="M1395,154.5 L1399,149" stroke="#3a4fc8" stroke-width="2"/><path d="M1402,145 L1405,148" stroke="#3a4fc8" stroke-width="2.2"/><defs><linearGradient id="filmg" x1="0" y1="0" x2="1" y2="0"><stop offset="0" stop-color="#1a5aa8"/><stop offset="0.5" stop-color="#5ab0f0"/><stop offset="1" stop-color="#1a6ac0"/></linearGradient></defs><g transform="rotate(3 1428 152)"><rect x="1416" y="141.5" width="24" height="21" fill="#222"/><rect x="1416.5" y="144.5" width="23" height="15" fill="url(#filmg)"/><rect x="1417.0" y="142.3" width="1.9" height="1.6" fill="#fff"/><rect x="1417.0" y="160.3" width="1.9" height="1.6" fill="#fff"/><rect x="1420.3" y="142.3" width="1.9" height="1.6" fill="#fff"/><rect x="1420.3" y="160.3" width="1.9" height="1.6" fill="#fff"/><rect x="1423.6" y="142.3" width="1.9" height="1.6" fill="#fff"/><rect x="1423.6" y="160.3" width="1.9" height="1.6" fill="#fff"/><rect x="1426.9" y="142.3" width="1.9" height="1.6" fill="#fff"/><rect x="1426.9" y="160.3" width="1.9" height="1.6" fill="#fff"/><rect x="1430.2" y="142.3" width="1.9" height="1.6" fill="#fff"/><rect x="1430.2" y="160.3" width="1.9" height="1.6" fill="#fff"/><rect x="1433.5" y="142.3" width="1.9" height="1.6" fill="#fff"/><rect x="1433.5" y="160.3" width="1.9" height="1.6" fill="#fff"/><rect x="1436.8" y="142.3" width="1.9" height="1.6" fill="#fff"/><rect x="1436.8" y="160.3" width="1.9" height="1.6" fill="#fff"/><path d="M1424,144.5 V159.5 M1432,144.5 V159.5" stroke="#222" stroke-width="0.8"/></g><circle cx="1460.5" cy="152" r="11" fill="#e8e8ec" stroke="#aaa" stroke-width="0.8"/><circle cx="1460.5" cy="152" r="9" fill="url(#helpg)"/><text x="1456.5" y="157" font-family='"Liberation Sans", sans-serif' font-size="13" font-weight="bold" fill="#fff">?</text><rect x="1531.5" y="165.5" width="36" height="58.5" fill="#f0f0f5" stroke="#dcdce2" stroke-width="1"/><rect x="1533.5" y="168.5" width="31" height="19" fill="#9cb4d0" stroke="#a4a4a8" stroke-width="1"/><rect x="1537" y="181" width="1.6" height="1.6" fill="#333"/><rect x="1540" y="181" width="1.6" height="1.6" fill="#333"/><rect x="1543" y="181" width="1.6" height="1.6" fill="#333"/><path d="M1553.5,174.5 L1558.5,179.5 M1558.5,174.5 L1553.5,179.5" stroke="#333" stroke-width="1"/><circle cx="1547.5" cy="206" r="6.8" fill="none" stroke="#1d3f6e" stroke-width="2"/><path d="M1540,194 L1543.5,196.5 L1540,199Z M1563,206 L1558.5,203.5 V208.5Z M1540,213 L1543.5,215.5 L1540,218Z" fill="#1d3f6e"/><rect x="1414.5" y="224.5" width="36" height="58.5" fill="#f0f0f5" stroke="#dcdce2" stroke-width="1"/><rect x="1416.5" y="227.5" width="31" height="19" fill="#9cb4d0" stroke="#a4a4a8" stroke-width="1"/><rect x="1420" y="240" width="1.6" height="1.6" fill="#333"/><rect x="1423" y="240" width="1.6" height="1.6" fill="#333"/><rect x="1426" y="240" width="1.6" height="1.6" fill="#333"/><path d="M1436.5,233.5 L1441.5,238.5 M1441.5,233.5 L1436.5,238.5" stroke="#333" stroke-width="1"/><path d="M1419.8,265 L1433.5,254 L1443.8,275.8 H1419.8Z" fill="#b4b4b8" stroke="#8a8a8e" stroke-width="1"/><rect x="1548.5" y="909.5" width="36" height="34" fill="#f0f0f5" stroke="#dcdce2" stroke-width="1"/><rect x="1550.5" y="912.5" width="31" height="19" fill="#9cb4d0" stroke="#a4a4a8" stroke-width="1"/><rect x="1554" y="925" width="1.6" height="1.6" fill="#333"/><rect x="1557" y="925" width="1.6" height="1.6" fill="#333"/><rect x="1560" y="925" width="1.6" height="1.6" fill="#333"/><path d="M1570.5,918.5 L1575.5,923.5 M1575.5,918.5 L1570.5,923.5" stroke="#333" stroke-width="1"/><rect x="1554.5" y="938" width="13" height="10" rx="2" fill="none" stroke="#e84848" stroke-width="1.6"/><defs><pattern id="wood" patternUnits="userSpaceOnUse" width="140" height="300"><rect width="140" height="300" fill="#8e5428"/><rect x="45.3" y="0" width="2.2" height="300" fill="#82491f" opacity="0.45"/><rect x="10.1" y="0" width="3.9" height="300" fill="#8d5329" opacity="0.45"/><rect x="81.6" y="0" width="5.6" height="300" fill="#94592c" opacity="0.45"/><rect x="5.2" y="0" width="3.5" height="300" fill="#82491f" opacity="0.45"/><rect x="33.7" y="0" width="4.0" height="300" fill="#82491f" opacity="0.45"/><rect x="115.8" y="0" width="2.1" height="300" fill="#94592c" opacity="0.45"/><rect x="88.3" y="0" width="4.1" height="300" fill="#82491f" opacity="0.45"/><rect x="80.8" y="0" width="3.3" height="300" fill="#94592c" opacity="0.45"/><rect x="6.5" y="0" width="5.4" height="300" fill="#8d5329" opacity="0.45"/><rect x="58.7" y="0" width="3.9" height="300" fill="#97602f" opacity="0.45"/><rect x="43.2" y="0" width="5.2" height="300" fill="#94592c" opacity="0.45"/><rect x="14.4" y="0" width="4.1" height="300" fill="#94592c" opacity="0.45"/><rect x="52.1" y="0" width="4.0" height="300" fill="#82491f" opacity="0.45"/><rect x="79.0" y="0" width="4.3" height="300" fill="#7f461e" opacity="0.45"/><rect x="95.3" y="0" width="3.4" height="300" fill="#8d5329" opacity="0.45"/><rect x="65.2" y="0" width="5.7" height="300" fill="#8d5329" opacity="0.45"/><rect x="42.0" y="0" width="5.1" height="300" fill="#94592c" opacity="0.45"/><rect x="11.5" y="0" width="2.9" height="300" fill="#7f461e" opacity="0.45"/><rect x="122.5" y="0" width="4.8" height="300" fill="#8d5329" opacity="0.45"/><rect x="85.3" y="0" width="1.8" height="300" fill="#97602f" opacity="0.45"/><rect x="58.5" y="0" width="4.9" height="300" fill="#94592c" opacity="0.45"/><rect x="130.7" y="0" width="3.4" height="300" fill="#82491f" opacity="0.45"/></pattern><filter id="soft" x="-20%" y="-20%" width="140%" height="140%"><feGaussianBlur stdDeviation="1.6 5"/></filter><filter id="soft2" x="-20%" y="-20%" width="140%" height="140%"><feGaussianBlur stdDeviation="4"/></filter><pattern id="gray" patternUnits="userSpaceOnUse" width="120" height="260"><rect width="120" height="260" fill="#bbbbbb"/><g filter="url(#soft)"><rect x="91.7" y="205.1" width="3.5" height="58.2" rx="2" fill="#b0b0b0" opacity="0.6"/><rect x="71.3" y="87.7" width="3.5" height="105.6" rx="2" fill="#b0b0b0" opacity="0.6"/><rect x="56.9" y="-23.0" width="3.8" height="93.1" rx="2" fill="#b4b4b4" opacity="0.6"/><rect x="119.2" y="39.7" width="4.4" height="64.7" rx="2" fill="#b0b0b0" opacity="0.6"/><rect x="2.7" y="7.1" width="3.1" height="40.5" rx="2" fill="#cbcbcb" opacity="0.6"/><rect x="26.2" y="166.7" width="2.5" height="65.8" rx="2" fill="#c6c6c6" opacity="0.6"/><rect x="9.7" y="113.8" width="3.1" height="109.5" rx="2" fill="#c6c6c6" opacity="0.6"/><rect x="103.7" y="76.3" width="2.5" height="62.3" rx="2" fill="#c6c6c6" opacity="0.6"/><rect x="114.9" y="9.3" width="2.0" height="50.9" rx="2" fill="#c8c8c8" opacity="0.6"/><rect x="1.4" y="11.1" width="4.4" height="55.4" rx="2" fill="#c8c8c8" opacity="0.6"/><rect x="50.3" y="118.6" width="2.8" height="115.8" rx="2" fill="#b4b4b4" opacity="0.6"/><rect x="114.0" y="167.1" width="3.8" height="71.1" rx="2" fill="#b4b4b4" opacity="0.6"/><rect x="47.1" y="-11.0" width="2.9" height="87.1" rx="2" fill="#cbcbcb" opacity="0.6"/><rect x="22.9" y="83.4" width="4.9" height="39.9" rx="2" fill="#b4b4b4" opacity="0.6"/><rect x="6.3" y="2.4" width="1.5" height="39.1" rx="2" fill="#b0b0b0" opacity="0.6"/><rect x="73.6" y="18.2" width="1.7" height="63.9" rx="2" fill="#b0b0b0" opacity="0.6"/><rect x="114.7" y="92.8" width="3.6" height="40.4" rx="2" fill="#c6c6c6" opacity="0.6"/><rect x="119.2" y="95.5" width="3.1" height="37.7" rx="2" fill="#cbcbcb" opacity="0.6"/><rect x="90.0" y="94.0" width="4.1" height="92.3" rx="2" fill="#b4b4b4" opacity="0.6"/><rect x="2.8" y="107.9" width="4.8" height="43.2" rx="2" fill="#b4b4b4" opacity="0.6"/><rect x="109.7" y="43.5" width="4.2" height="87.9" rx="2" fill="#cbcbcb" opacity="0.6"/><rect x="83.5" y="62.7" width="2.4" height="45.0" rx="2" fill="#c8c8c8" opacity="0.6"/><rect x="63.9" y="52.3" width="4.2" height="50.1" rx="2" fill="#c8c8c8" opacity="0.6"/><rect x="96.7" y="167.2" width="4.4" height="50.4" rx="2" fill="#b4b4b4" opacity="0.6"/><rect x="59.1" y="237.1" width="4.1" height="101.1" rx="2" fill="#c6c6c6" opacity="0.6"/><rect x="31.1" y="227.8" width="3.9" height="70.3" rx="2" fill="#b0b0b0" opacity="0.6"/><rect x="114.6" y="21.7" width="2.8" height="50.4" rx="2" fill="#c8c8c8" opacity="0.6"/><rect x="40.5" y="235.9" width="3.2" height="84.9" rx="2" fill="#cbcbcb" opacity="0.6"/><rect x="57.5" y="183.9" width="3.8" height="37.6" rx="2" fill="#cbcbcb" opacity="0.6"/><rect x="109.2" y="170.0" width="4.2" height="73.0" rx="2" fill="#c8c8c8" opacity="0.6"/><rect x="52.1" y="-15.7" width="3.7" height="115.2" rx="2" fill="#c6c6c6" opacity="0.6"/><rect x="55.6" y="-16.2" width="4.1" height="44.3" rx="2" fill="#c8c8c8" opacity="0.6"/><rect x="3.3" y="90.3" width="3.6" height="89.0" rx="2" fill="#b4b4b4" opacity="0.6"/><rect x="99.2" y="144.0" width="4.9" height="61.5" rx="2" fill="#b4b4b4" opacity="0.6"/><rect x="65.8" y="183.8" width="1.6" height="95.4" rx="2" fill="#cbcbcb" opacity="0.6"/><rect x="63.2" y="81.5" width="4.8" height="108.5" rx="2" fill="#c8c8c8" opacity="0.6"/><rect x="3.4" y="100.3" width="2.2" height="98.7" rx="2" fill="#b0b0b0" opacity="0.6"/><rect x="31.1" y="-3.3" width="3.0" height="111.9" rx="2" fill="#b0b0b0" opacity="0.6"/><rect x="107.7" y="188.2" width="3.8" height="76.5" rx="2" fill="#b4b4b4" opacity="0.6"/><rect x="15.7" y="103.0" width="2.0" height="108.6" rx="2" fill="#c8c8c8" opacity="0.6"/><rect x="73.0" y="1.9" width="4.2" height="42.7" rx="2" fill="#b4b4b4" opacity="0.6"/><rect x="87.0" y="51.3" width="3.4" height="76.7" rx="2" fill="#b4b4b4" opacity="0.6"/><rect x="57.9" y="207.3" width="4.2" height="35.1" rx="2" fill="#c8c8c8" opacity="0.6"/><rect x="33.2" y="102.2" width="4.2" height="80.6" rx="2" fill="#cbcbcb" opacity="0.6"/><rect x="53.2" y="101.6" width="3.6" height="76.1" rx="2" fill="#b0b0b0" opacity="0.6"/><rect x="54.3" y="93.9" width="3.4" height="114.7" rx="2" fill="#b4b4b4" opacity="0.6"/><rect x="105.2" y="32.7" width="4.8" height="80.4" rx="2" fill="#c8c8c8" opacity="0.6"/><rect x="100.8" y="-5.9" width="2.0" height="69.8" rx="2" fill="#cbcbcb" opacity="0.6"/><rect x="80.5" y="19.6" width="3.0" height="57.3" rx="2" fill="#cbcbcb" opacity="0.6"/><rect x="107.6" y="160.5" width="2.0" height="89.4" rx="2" fill="#c8c8c8" opacity="0.6"/><rect x="30.4" y="91.0" width="2.0" height="97.2" rx="2" fill="#cbcbcb" opacity="0.6"/><rect x="47.8" y="237.2" width="3.2" height="104.9" rx="2" fill="#c8c8c8" opacity="0.6"/><rect x="84.8" y="73.1" width="5.0" height="67.9" rx="2" fill="#b0b0b0" opacity="0.6"/><rect x="38.2" y="-34.5" width="4.0" height="79.9" rx="2" fill="#c6c6c6" opacity="0.6"/><rect x="84.4" y="104.9" width="2.8" height="56.6" rx="2" fill="#cbcbcb" opacity="0.6"/><rect x="13.5" y="24.0" width="4.7" height="108.9" rx="2" fill="#cbcbcb" opacity="0.6"/><rect x="31.9" y="178.1" width="1.6" height="54.3" rx="2" fill="#c8c8c8" opacity="0.6"/><rect x="98.4" y="149.3" width="4.5" height="115.1" rx="2" fill="#c6c6c6" opacity="0.6"/><rect x="17.9" y="119.8" width="4.7" height="93.0" rx="2" fill="#cbcbcb" opacity="0.6"/><rect x="33.5" y="11.3" width="4.3" height="110.6" rx="2" fill="#b0b0b0" opacity="0.6"/></g></pattern><pattern id="cloud" patternUnits="userSpaceOnUse" width="90" height="120"><rect width="90" height="120" fill="#bdbdbd"/><g filter="url(#soft2)"><circle cx="84.5" cy="76.1" r="10.4" fill="#cbcbcb" opacity="0.6"/><circle cx="54.7" cy="26.7" r="6.1" fill="#cbcbcb" opacity="0.6"/><circle cx="40.8" cy="40.7" r="8.4" fill="#c6c6c6" opacity="0.6"/><circle cx="56.0" cy="5.2" r="9.7" fill="#cbcbcb" opacity="0.6"/><circle cx="87.2" cy="31.4" r="5.4" fill="#c6c6c6" opacity="0.6"/><circle cx="56.6" cy="63.7" r="5.6" fill="#c6c6c6" opacity="0.6"/><circle cx="45.0" cy="21.3" r="6.8" fill="#cbcbcb" opacity="0.6"/><circle cx="89.5" cy="4.4" r="4.1" fill="#b3b3b3" opacity="0.6"/><circle cx="49.6" cy="22.7" r="7.8" fill="#c6c6c6" opacity="0.6"/><circle cx="9.6" cy="98.3" r="7.5" fill="#c6c6c6" opacity="0.6"/><circle cx="49.1" cy="106.6" r="11.8" fill="#c6c6c6" opacity="0.6"/><circle cx="61.9" cy="117.9" r="6.7" fill="#b3b3b3" opacity="0.6"/><circle cx="65.6" cy="16.8" r="11.9" fill="#cbcbcb" opacity="0.6"/><circle cx="75.3" cy="1.7" r="9.0" fill="#c6c6c6" opacity="0.6"/><circle cx="38.8" cy="6.6" r="9.3" fill="#c6c6c6" opacity="0.6"/><circle cx="78.3" cy="80.5" r="6.3" fill="#cbcbcb" opacity="0.6"/></g></pattern></defs><path d="M 903,226.3 L 991,231.8 C 1013,234 1022.8,249 1022.8,270 L 1018.3,390 L 1002,720 L 999,822 L 940,868 L 933,868 L 933,700 L 903,300 Z" fill="url(#wood)" stroke="#111" stroke-width="1.2"/><path d="M 991,234.3 C 1010.5,236.3 1020.2,250 1020.2,270.5 L 1015.8,390 L 999.8,720" fill="none" stroke="#111" stroke-width="0.8"/><polygon points="463.0,209.4 554.0,200.0 913.0,227.0 913.0,245.0 890.0,244.0 832.0,240.0" fill="url(#wood)" stroke="#111" stroke-width="1.2" stroke-linejoin="round"/><polygon points="492.0,206.8 846.0,235.5 846.0,241.5 492.0,212.3" fill="#6a3a1a"/><line x1="492.0" y1="206.8" x2="846.0" y2="235.5" stroke="#111" stroke-width="0.9" opacity="1"/><polygon points="520.0,207.6 562.0,211.1 562.0,214.6 520.0,211.1" fill="#70401c" stroke="#111" stroke-width="0.7" stroke-linejoin="round"/><polygon points="622.0,216.0 664.0,219.5 664.0,223.0 622.0,219.5" fill="#70401c" stroke="#111" stroke-width="0.7" stroke-linejoin="round"/><polygon points="752.0,226.7 794.0,230.2 794.0,233.7 752.0,230.2" fill="#70401c" stroke="#111" stroke-width="0.7" stroke-linejoin="round"/><g fill="none" stroke="#111" stroke-width="0.8"><path d="M509,208 L512.5,203.5 L516,208.3"/><path d="M644,216 L647.5,211.5 L651,216.5"/><path d="M822,235.5 L828,228 L834,236"/><path d="M874,241.2 L877,237.5 L880,241.5"/></g><line x1="554.0" y1="200.0" x2="554.0" y2="207.0" stroke="#111" stroke-width="1" opacity="1"/><line x1="753.0" y1="215.5" x2="753.0" y2="224.0" stroke="#111" stroke-width="0.9" opacity="1"/><line x1="846.0" y1="239.0" x2="913.0" y2="227.0" stroke="#111" stroke-width="2" opacity="1"/><line x1="913.0" y1="227.0" x2="913.0" y2="245.0" stroke="#111" stroke-width="1" opacity="1"/><polygon points="463.0,209.4 832.0,239.5 832.0,254.6 465.0,222.0" fill="#8f4f25" stroke="#111" stroke-width="1.2" stroke-linejoin="round"/><polygon points="465.0,222.0 526.7,228.0 594.0,234.5 667.6,240.5 746.0,247.5 832.0,254.6 832.0,372.0 749.0,360.2 672.0,349.2 601.0,339.0 535.0,329.5 474.0,321.0" fill="url(#cloud)" stroke="#111" stroke-width="1" stroke-linejoin="round"/><line x1="526.7" y1="228.0" x2="535.0" y2="329.5" stroke="#111" stroke-width="1.3" opacity="1"/><line x1="594.0" y1="234.5" x2="601.0" y2="339.0" stroke="#111" stroke-width="1.3" opacity="1"/><line x1="667.6" y1="240.5" x2="672.0" y2="349.2" stroke="#111" stroke-width="1.3" opacity="1"/><line x1="746.0" y1="247.5" x2="749.0" y2="360.2" stroke="#111" stroke-width="1.3" opacity="1"/><polygon points="474.0,321.0 832.0,372.0 832.0,380.0 474.6,325.4" fill="#8f4f25" stroke="#111" stroke-width="0.8" stroke-linejoin="round"/><polygon points="511.2,706.0 833.0,822.0 833.0,837.0 514.6,720.5 514.6,712.0" fill="#a0561f" stroke="#111" stroke-width="0.8" stroke-linejoin="round"/><polygon points="474.6,325.4 832.0,380.0 833.0,781.0 692.0,733.5 692.3,773.2 628.3,751.0 567.3,729.3 511.2,708.8" fill="url(#gray)" stroke="#111" stroke-width="1" stroke-linejoin="round"/><line x1="535.6" y1="334.5" x2="567.3" y2="729.3" stroke="#111" stroke-width="1.3" opacity="1"/><line x1="601.5" y1="344.5" x2="628.3" y2="751.0" stroke="#111" stroke-width="1.3" opacity="1"/><line x1="671.6" y1="355.6" x2="693.0" y2="773.2" stroke="#111" stroke-width="1.3" opacity="1"/><line x1="748.8" y1="367.9" x2="759.5" y2="754.0" stroke="#111" stroke-width="1.3" opacity="1"/><polygon points="692.0,733.5 833.0,781.0 833.0,825.7 692.0,773.0" fill="url(#gray)" stroke="#111" stroke-width="1" stroke-linejoin="round"/><polygon points="692.0,733.5 833.0,781.0 833.0,784.0 692.0,736.5" fill="#8f4f25"/><line x1="692.0" y1="737.0" x2="833.0" y2="785.0" stroke="#555" stroke-width="1" opacity="1"/><path d="M 889,244 L 920,248 C 942,251 953.7,265 953.7,287 L 941,768 L 933,768 C 905,762 884,745 884,700 L 886,390 Z" fill="url(#wood)" stroke="#111" stroke-width="1.2"/><path d="M 918,251.5 C 939,254.5 950.2,267 950.2,287 L 937.8,768" fill="none" stroke="#111" stroke-width="0.7"/><g fill="none" stroke="#1a1008" stroke-width="0.9"><path d="M965,236 L975.5,247 L965,258 L954.5,247 Z"/><path d="M965,258 L961.5,349"/><path d="M955,350 H968 L961.5,358 Z"/><path d="M959,515 L971,527 L959,539 L947,527 Z"/></g><text transform="translate(960,242) rotate(90)" font-family='"Liberation Sans", sans-serif' font-size="10" fill="#1a1008">34</text><text transform="translate(966.5,268) rotate(88)" font-family='"Liberation Sans", sans-serif' font-size="8.4" fill="#1a1008" textLength="78" lengthAdjust="spacingAndGlyphs">Hồ phải tủ trang trí</text><text transform="translate(957.5,287) rotate(88)" font-family='"Liberation Sans", sans-serif' font-size="4.5" fill="#1a1008" textLength="36" lengthAdjust="spacingAndGlyphs">ABF solutions</text><text transform="translate(954,520) rotate(90)" font-family='"Liberation Sans", sans-serif' font-size="10" fill="#1a1008">35</text><path d="M957.5,594 L957,624" stroke="#1a1008" stroke-width="0.8"/><text transform="translate(962,594) rotate(88)" font-family='"Liberation Sans", sans-serif' font-size="8.4" fill="#1a1008" textLength="28" lengthAdjust="spacingAndGlyphs">ải tủ t</text><text transform="translate(951.5,596) rotate(88)" font-family='"Liberation Sans", sans-serif' font-size="4.5" fill="#1a1008" textLength="22" lengthAdjust="spacingAndGlyphs">E soluti</text><text transform="translate(891.5,674) rotate(-90) scale(1,-1)" font-family='"Liberation Sans", sans-serif' font-size="12.5" fill="#1a1008" textLength="91" lengthAdjust="spacingAndGlyphs">ỏ TRANG TRÍ</text><g fill="none" stroke="#1a1008" stroke-width="0.9"><path d="M886,560 L898,575 L886,575 Z"/><path d="M884,688 L902,708 L884,718"/></g><text transform="translate(886,708) rotate(-90) scale(1,-1)" font-family='"Liberation Sans", sans-serif' font-size="11" fill="#1a1008">A3</text><defs><linearGradient id="shelfg" x1="0" y1="0" x2="0" y2="1"><stop offset="0" stop-color="#6a3a1a"/><stop offset="0.6" stop-color="#5a3016"/><stop offset="1" stop-color="#6a3c1c"/></linearGradient></defs><polygon points="953.0,363.0 1016.0,371.0 1016.0,374.3 952.0,392.4" fill="url(#shelfg)" stroke="#111" stroke-width="0.9" stroke-linejoin="round"/><polygon points="952.0,392.4 1016.0,374.3 1016.0,377.3 952.0,397.4" fill="#8a5027" stroke="#111" stroke-width="0.7" stroke-linejoin="round"/><polygon points="950.0,453.5 1012.2,464.2 1011.8,464.6 948.6,495.1" fill="url(#shelfg)" stroke="#111" stroke-width="0.9" stroke-linejoin="round"/><polygon points="948.6,495.1 1011.8,464.6 1011.8,468.6 948.6,500.1" fill="#8a5027" stroke="#111" stroke-width="0.7" stroke-linejoin="round"/><polygon points="947.0,541.0 1008.0,552.9 1008.0,555.4 947.0,588.5" fill="url(#shelfg)" stroke="#111" stroke-width="0.9" stroke-linejoin="round"/><polygon points="947.0,588.5 1008.0,555.4 1008.0,558.8 947.0,593.5" fill="#8a5027" stroke="#111" stroke-width="0.7" stroke-linejoin="round"/><polygon points="944.4,623.3 1004.7,637.7 1004.7,640.3 944.0,678.5" fill="url(#shelfg)" stroke="#111" stroke-width="0.9" stroke-linejoin="round"/><polygon points="944.0,678.5 1004.7,640.3 1004.7,643.0 944.0,683.5" fill="#8a5027" stroke="#111" stroke-width="0.7" stroke-linejoin="round"/><polygon points="942.0,701.5 1000.5,717.3 1000.0,720.0 942.0,762.0" fill="url(#shelfg)" stroke="#111" stroke-width="0.9" stroke-linejoin="round"/><polygon points="942.0,762.0 1000.0,720.0 1000.0,723.0 942.0,767.0" fill="#8a5027" stroke="#111" stroke-width="0.7" stroke-linejoin="round"/><g fill="none" stroke="#1a1008" stroke-width="0.8"><path d="M957,475 L963,472.5 L977,476 L970,479 Z"/><path d="M959,386 L964,383 L974,385.5 L968,388.5 Z"/></g><path d="M 832.5,240 L 890,244 L 886,390 L 884,715 C 884,748 903,764 936,768.5 L 936,878 L 834,841.7 Z" fill="url(#cloud)" stroke="#111" stroke-width="1.2"/><path d="M 887,390 L 886.6,715 C 886.6,746 905,761.5 936,766" fill="none" stroke="#222" stroke-width="0.7"/><line x1="832.5" y1="381.0" x2="888.0" y2="388.0" stroke="#333" stroke-width="0.8" opacity="1"/><line x1="888.0" y1="389.0" x2="949.5" y2="397.0" stroke="#222" stroke-width="0.8" opacity="1"/><line x1="887.0" y1="246.0" x2="885.0" y2="700.0" stroke="#999" stroke-width="1.5" opacity="0.8"/><polygon points="937.0,855.0 993.0,810.0 998.0,808.0 998.0,820.6 937.0,869.8" fill="#9c5520" stroke="#111" stroke-width="0.8" stroke-linejoin="round"/><polygon points="939.5,768.5 999.0,723.4 999.0,770.0 939.5,815.0" fill="#cfcfcf" stroke="#111" stroke-width="0.8" stroke-linejoin="round"/><polygon points="939.5,768.5 999.0,723.4 999.0,765.0 939.5,808.8" fill="url(#gray)" stroke="#111" stroke-width="1" stroke-linejoin="round"/><polygon points="939.5,812.4 996.8,768.5 995.6,808.8 939.5,855.0" fill="url(#gray)" stroke="#111" stroke-width="1" stroke-linejoin="round"/><polygon points="935.5,768.5 938.5,768.5 938.5,874.0 935.5,878.0" fill="#a8a8a8" stroke="#111" stroke-width="0.6" stroke-linejoin="round"/></svg></body></html>
